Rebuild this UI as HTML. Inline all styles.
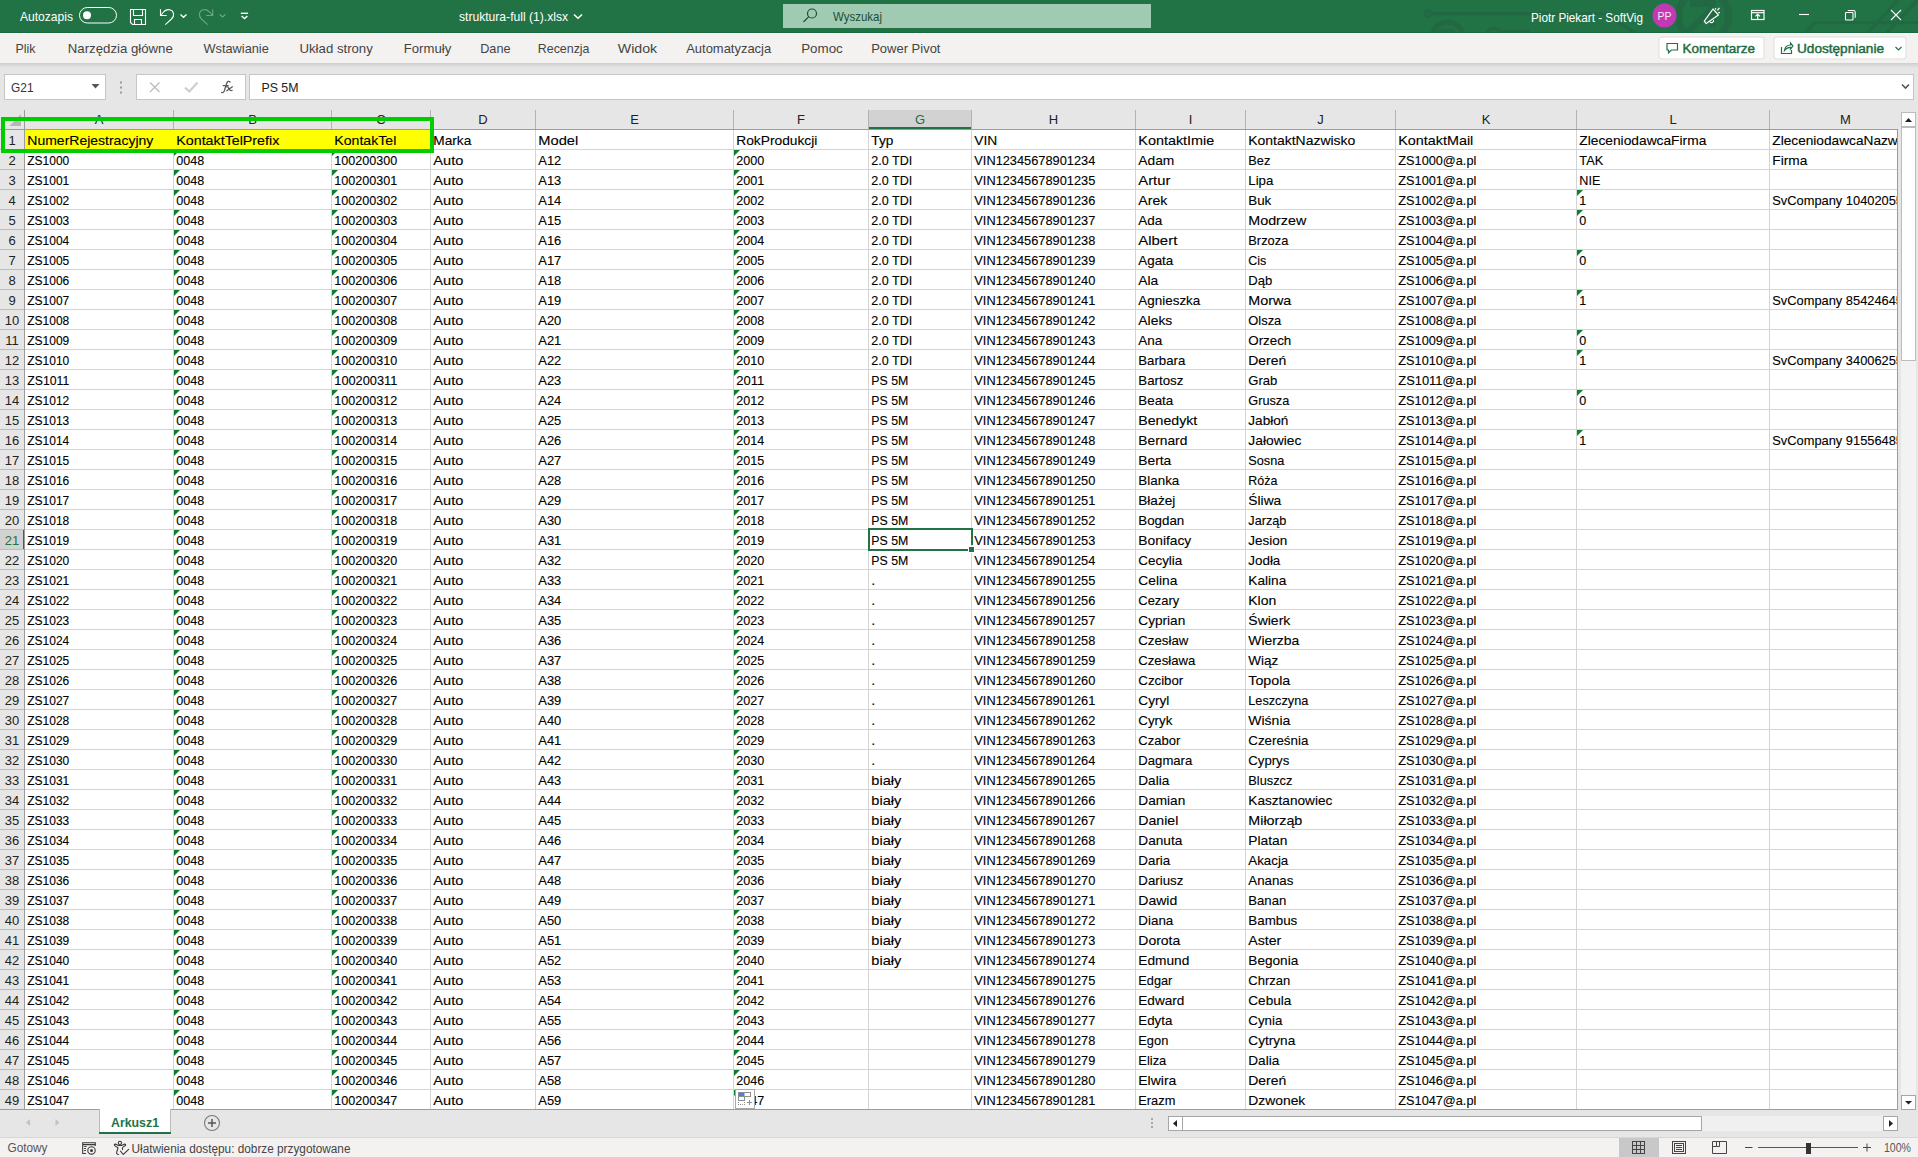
<!DOCTYPE html><html><head><meta charset="utf-8"><style>html,body{margin:0;padding:0;width:1918px;height:1157px;overflow:hidden;background:#e6e6e6;font-family:"Liberation Sans",sans-serif}</style></head><body><svg width="1918" height="1157" viewBox="0 0 1918 1157" font-family="Liberation Sans, sans-serif" style="position:absolute;left:0;top:0">
<defs><clipPath id="gridclip"><rect x="25" y="130" width="1872" height="979"/></clipPath><linearGradient id="shad" x1="0" y1="0" x2="0" y2="1"><stop offset="0" stop-color="#cfcecd"/><stop offset="1" stop-color="#e6e6e6"/></linearGradient></defs>
<rect x="0" y="0" width="1918" height="1157" fill="#e6e6e6"/>
<rect x="0" y="0" width="1918" height="33" fill="#217346"/>
<rect x="0" y="32" width="1918" height="1" fill="#166a3b"/>
<svg x="0" y="0" width="1918" height="32" overflow="hidden"><g fill="none" stroke="#226843" stroke-width="3.4"><path d="M1431.5 13.6 H1605 L1646 40"/><circle cx="1428.4" cy="13.4" r="3.1" stroke-width="3.2"/><circle cx="1447.5" cy="37.7" r="15.5" stroke-width="5"/><circle cx="1494" cy="36" r="7.5" stroke-width="3.4"/><path d="M1500 31.8 H1530"/><circle cx="1703.6" cy="16" r="25" stroke-width="7"/><path d="M1800 38 L1815 22.6 H1918"/><path d="M1864 37 L1900 -2"/><path d="M1883 37 L1920 -3"/></g><path d="M1690 0 H1716 V27 H1710 V7 H1690 Z M1686 29 L1712 5 L1716 9 L1691 33 Z" fill="#226843"/><rect x="1438.4" y="29.4" width="16.6" height="4" fill="#226843"/></svg>
<rect x="0" y="33" width="1918" height="30" fill="#f3f2f1"/>
<rect x="0" y="33" width="1918" height="1" fill="#fcfbfb"/>
<rect x="0" y="63" width="1918" height="5" fill="url(#shad)"/>
<text x="20" y="21" font-size="13" fill="#fff" font-weight="normal" text-anchor="start" textLength="53.00" lengthAdjust="spacingAndGlyphs">Autozapis</text>
<rect x="79.5" y="7.5" width="37" height="15.5" rx="7.75" fill="none" stroke="#fff" stroke-width="1"/>
<circle cx="87" cy="15.3" r="4" fill="#fff"/>
<g fill="none" stroke="#fff" stroke-width="1.1"><path d="M130.5 9.5 H145.5 V24.5 H132.5 L130.5 22.5 Z"/><path d="M133.5 9.5 V15.5 H142.5 V9.5"/><path d="M134.5 24.5 V19.5 H141.5 V24.5"/></g>
<g fill="none" stroke="#fff" stroke-width="1.1"><path d="M160.5 9.3 V15.5 H166.7"/><path d="M161 15 L164 11.5 C167 8.5 172.5 9 173.5 13.5 C174 16 173 17.5 171.5 19 L165.3 24.6"/><path d="M180.5 14.5 L183.5 17.2 L186.5 14.5" stroke-width="1.4"/></g>
<g fill="none" stroke="#fff" stroke-opacity="0.35" stroke-width="1.1"><path d="M212.7 9.3 V15.5 H206.1"/><path d="M212.2 15 L209 11.5 C206 8.5 200.5 9 199.5 13.5 C199 16 200 17.5 201.5 19 L207.6 24.6"/><path d="M219.8 14.5 L222.6 17 L225.4 14.5" stroke-width="1.2"/></g>
<g fill="none" stroke="#fff" stroke-width="1.4"><path d="M240.8 13.3 H248.1"/><path d="M241.6 16 L244.5 18.6 L247.4 16"/></g>
<text x="459" y="21" font-size="13" fill="#fff" font-weight="normal" text-anchor="start" textLength="109.00" lengthAdjust="spacingAndGlyphs">struktura-full (1).xlsx</text>
<path d="M574 14.5 L578 18.3 L582 14.5" fill="none" stroke="#fff" stroke-width="1.5"/>
<rect x="783" y="4" width="368" height="24" fill="#a0cbb2"/>
<g fill="none" stroke="#1b4f33" stroke-width="1.2"><circle cx="812" cy="13.5" r="4.5"/><path d="M808.8 16.7 L803.5 22"/></g>
<text x="833" y="20.5" font-size="13" fill="#1b4f33" font-weight="normal" text-anchor="start" textLength="49.00" lengthAdjust="spacingAndGlyphs">Wyszukaj</text>
<text x="1531" y="21.5" font-size="13" fill="#fff" font-weight="normal" text-anchor="start" textLength="112.00" lengthAdjust="spacingAndGlyphs">Piotr Piekart - SoftVig</text>
<circle cx="1664.5" cy="15.5" r="12" fill="#c239b3"/>
<text x="1664.5" y="20" font-size="11" fill="#fbe9f8" font-weight="normal" text-anchor="middle" textLength="14.00" lengthAdjust="spacingAndGlyphs">PP</text>
<g fill="none" stroke="#fff" stroke-width="1.2" stroke-linejoin="round"><path d="M1713 9 L1718.4 14.9 L1706.2 23.6 L1704.3 21.2 Z"/><path d="M1709.8 21.5 A2 2 0 0 0 1713.5 20"/><path d="M1715.4 8 L1715.8 9.5 M1717.3 10.3 L1719.5 7.8 M1718.3 12.6 L1720 12.6"/></g>
<g fill="none" stroke="#fff" stroke-width="1.2"><rect x="1751.5" y="10.5" width="12.5" height="9"/><path d="M1751.5 12.7 H1764"/><path d="M1757.7 19.5 V14.3 M1755.4 16.4 L1757.7 14 L1760 16.4"/></g>
<g fill="none" stroke="#fff" stroke-width="1.1"><path d="M1799 14.5 H1809"/><rect x="1845.5" y="12.5" width="7.5" height="7.5" rx="0.8"/><path d="M1847.8 10.5 H1853.5 Q1855.2 10.5 1855.2 12.2 V17.8"/><path d="M1891 10 L1901 20 M1901 10 L1891 20"/></g>
<text x="15.5" y="53" font-size="13" fill="#444" font-weight="normal" text-anchor="start" textLength="20.00" lengthAdjust="spacingAndGlyphs">Plik</text>
<text x="67.8" y="53" font-size="13" fill="#444" font-weight="normal" text-anchor="start" textLength="105.00" lengthAdjust="spacingAndGlyphs">Narzędzia główne</text>
<text x="203.5" y="53" font-size="13" fill="#444" font-weight="normal" text-anchor="start" textLength="65.30" lengthAdjust="spacingAndGlyphs">Wstawianie</text>
<text x="299.5" y="53" font-size="13" fill="#444" font-weight="normal" text-anchor="start" textLength="73.30" lengthAdjust="spacingAndGlyphs">Układ strony</text>
<text x="403.8" y="53" font-size="13" fill="#444" font-weight="normal" text-anchor="start" textLength="47.40" lengthAdjust="spacingAndGlyphs">Formuły</text>
<text x="480.2" y="53" font-size="13" fill="#444" font-weight="normal" text-anchor="start" textLength="30.30" lengthAdjust="spacingAndGlyphs">Dane</text>
<text x="537.8" y="53" font-size="13" fill="#444" font-weight="normal" text-anchor="start" textLength="51.70" lengthAdjust="spacingAndGlyphs">Recenzja</text>
<text x="617.8" y="53" font-size="13" fill="#444" font-weight="normal" text-anchor="start" textLength="39.40" lengthAdjust="spacingAndGlyphs">Widok</text>
<text x="686.2" y="53" font-size="13" fill="#444" font-weight="normal" text-anchor="start" textLength="85.00" lengthAdjust="spacingAndGlyphs">Automatyzacja</text>
<text x="801.2" y="53" font-size="13" fill="#444" font-weight="normal" text-anchor="start" textLength="41.60" lengthAdjust="spacingAndGlyphs">Pomoc</text>
<text x="871.2" y="53" font-size="13" fill="#444" font-weight="normal" text-anchor="start" textLength="69.30" lengthAdjust="spacingAndGlyphs">Power Pivot</text>
<rect x="1659" y="37" width="105" height="22" rx="3" fill="#fff" stroke="#e1dfdd"/>
<g fill="none" stroke="#217346" stroke-width="1.2"><path d="M1667 43.5 H1677.5 V50 H1671.5 L1668.5 52.8 V50 H1667 Z"/></g>
<text x="1682.5" y="53" font-size="13" fill="#1e6b41" font-weight="normal" text-anchor="start" textLength="72.50" lengthAdjust="spacingAndGlyphs" stroke="#1e6b41" stroke-width="0.45">Komentarze</text>
<rect x="1774" y="37" width="132" height="22" rx="3" fill="#fff" stroke="#e1dfdd"/>
<g fill="none" stroke="#217346" stroke-width="1.2"><path d="M1781.5 47 V53.5 H1791.5 V50"/><path d="M1784.5 50.5 C1785 46.5 1787.5 45 1790.5 45 V43 L1793 46 L1790.5 49 V47.3 C1788 47.3 1786 48.5 1784.5 50.5 Z"/></g>
<text x="1797" y="53" font-size="13" fill="#1e6b41" font-weight="normal" text-anchor="start" textLength="87.00" lengthAdjust="spacingAndGlyphs" stroke="#1e6b41" stroke-width="0.45">Udostępnianie</text>
<path d="M1895.5 47 L1898.5 50 L1901.5 47" fill="none" stroke="#217346" stroke-width="1.2"/>
<rect x="4.5" y="74.5" width="101" height="25" fill="#fff" stroke="#c6c6c6"/>
<text x="11" y="91.5" font-size="13" fill="#333" font-weight="normal" text-anchor="start" textLength="22.50" lengthAdjust="spacingAndGlyphs">G21</text>
<path d="M91.5 84 H99.5 L95.5 88.5 Z" fill="#555"/>
<rect x="120" y="81.5" width="2" height="2" fill="#9a9a9a"/>
<rect x="120" y="86.5" width="2" height="2" fill="#9a9a9a"/>
<rect x="120" y="91.5" width="2" height="2" fill="#9a9a9a"/>
<rect x="136.5" y="74.5" width="109" height="25" fill="#fff" stroke="#c6c6c6"/>
<g fill="none" stroke="#bdbdbd" stroke-width="1.3"><path d="M150 82.5 L159.5 92 M159.5 82.5 L150 92"/></g>
<path d="M185 87.5 L189.3 91.5 L197.5 82.5" fill="none" stroke="#cdcdcd" stroke-width="2.1"/>
<g fill="none" stroke="#5a5a5a" stroke-width="1.25" stroke-linecap="round"><path d="M230 82 C229 80.8 227.3 81.3 226.8 83 L224.2 91.2 C223.8 92.6 222.6 93 221.5 92.3"/><path d="M223.2 85.6 H228.2"/><path d="M226.6 86.8 C228 86.4 228.6 87.5 229.4 89.3 C229.9 90.6 231 90.9 232.2 90.3 M232.4 86.8 L226.8 90.8"/></g>
<rect x="249.5" y="74.5" width="1664" height="25" fill="#fff" stroke="#c6c6c6"/>
<text x="261.5" y="91.5" font-size="13" fill="#222" font-weight="normal" text-anchor="start" textLength="37.00" lengthAdjust="spacingAndGlyphs">PS 5M</text>
<path d="M1902 84.5 L1905.5 88 L1909 84.5" fill="none" stroke="#555" stroke-width="1.6"/>
<rect x="0" y="110" width="1918" height="20" fill="#e6e6e6"/>
<rect x="0" y="130" width="25" height="980" fill="#e6e6e6"/>
<rect x="25" y="130" width="1872" height="979" fill="#fff"/>
<rect x="25" y="130" width="406" height="20" fill="#ffff00"/>
<rect x="869" y="110" width="103" height="19" fill="#d2d2d2"/>
<rect x="869" y="127" width="102" height="2" fill="#217346"/>
<rect x="0" y="529" width="23" height="21" fill="#d2d2d2"/>
<rect x="23" y="529" width="2" height="21" fill="#217346"/>
<rect x="173" y="130" width="1" height="979" fill="#d4d4d4"/>
<rect x="331" y="130" width="1" height="979" fill="#d4d4d4"/>
<rect x="430" y="130" width="1" height="979" fill="#d4d4d4"/>
<rect x="535" y="130" width="1" height="979" fill="#d4d4d4"/>
<rect x="733" y="130" width="1" height="979" fill="#d4d4d4"/>
<rect x="868" y="130" width="1" height="979" fill="#d4d4d4"/>
<rect x="971" y="130" width="1" height="979" fill="#d4d4d4"/>
<rect x="1135" y="130" width="1" height="979" fill="#d4d4d4"/>
<rect x="1245" y="130" width="1" height="979" fill="#d4d4d4"/>
<rect x="1395" y="130" width="1" height="979" fill="#d4d4d4"/>
<rect x="1576" y="130" width="1" height="979" fill="#d4d4d4"/>
<rect x="1769" y="130" width="1" height="979" fill="#d4d4d4"/>
<rect x="25" y="149" width="1872" height="1" fill="#d4d4d4"/>
<rect x="25" y="169" width="1872" height="1" fill="#d4d4d4"/>
<rect x="25" y="189" width="1872" height="1" fill="#d4d4d4"/>
<rect x="25" y="209" width="1872" height="1" fill="#d4d4d4"/>
<rect x="25" y="229" width="1872" height="1" fill="#d4d4d4"/>
<rect x="25" y="249" width="1872" height="1" fill="#d4d4d4"/>
<rect x="25" y="269" width="1872" height="1" fill="#d4d4d4"/>
<rect x="25" y="289" width="1872" height="1" fill="#d4d4d4"/>
<rect x="25" y="309" width="1872" height="1" fill="#d4d4d4"/>
<rect x="25" y="329" width="1872" height="1" fill="#d4d4d4"/>
<rect x="25" y="349" width="1872" height="1" fill="#d4d4d4"/>
<rect x="25" y="369" width="1872" height="1" fill="#d4d4d4"/>
<rect x="25" y="389" width="1872" height="1" fill="#d4d4d4"/>
<rect x="25" y="409" width="1872" height="1" fill="#d4d4d4"/>
<rect x="25" y="429" width="1872" height="1" fill="#d4d4d4"/>
<rect x="25" y="449" width="1872" height="1" fill="#d4d4d4"/>
<rect x="25" y="469" width="1872" height="1" fill="#d4d4d4"/>
<rect x="25" y="489" width="1872" height="1" fill="#d4d4d4"/>
<rect x="25" y="509" width="1872" height="1" fill="#d4d4d4"/>
<rect x="25" y="529" width="1872" height="1" fill="#d4d4d4"/>
<rect x="25" y="549" width="1872" height="1" fill="#d4d4d4"/>
<rect x="25" y="569" width="1872" height="1" fill="#d4d4d4"/>
<rect x="25" y="589" width="1872" height="1" fill="#d4d4d4"/>
<rect x="25" y="609" width="1872" height="1" fill="#d4d4d4"/>
<rect x="25" y="629" width="1872" height="1" fill="#d4d4d4"/>
<rect x="25" y="649" width="1872" height="1" fill="#d4d4d4"/>
<rect x="25" y="669" width="1872" height="1" fill="#d4d4d4"/>
<rect x="25" y="689" width="1872" height="1" fill="#d4d4d4"/>
<rect x="25" y="709" width="1872" height="1" fill="#d4d4d4"/>
<rect x="25" y="729" width="1872" height="1" fill="#d4d4d4"/>
<rect x="25" y="749" width="1872" height="1" fill="#d4d4d4"/>
<rect x="25" y="769" width="1872" height="1" fill="#d4d4d4"/>
<rect x="25" y="789" width="1872" height="1" fill="#d4d4d4"/>
<rect x="25" y="809" width="1872" height="1" fill="#d4d4d4"/>
<rect x="25" y="829" width="1872" height="1" fill="#d4d4d4"/>
<rect x="25" y="849" width="1872" height="1" fill="#d4d4d4"/>
<rect x="25" y="869" width="1872" height="1" fill="#d4d4d4"/>
<rect x="25" y="889" width="1872" height="1" fill="#d4d4d4"/>
<rect x="25" y="909" width="1872" height="1" fill="#d4d4d4"/>
<rect x="25" y="929" width="1872" height="1" fill="#d4d4d4"/>
<rect x="25" y="949" width="1872" height="1" fill="#d4d4d4"/>
<rect x="25" y="969" width="1872" height="1" fill="#d4d4d4"/>
<rect x="25" y="989" width="1872" height="1" fill="#d4d4d4"/>
<rect x="25" y="1009" width="1872" height="1" fill="#d4d4d4"/>
<rect x="25" y="1029" width="1872" height="1" fill="#d4d4d4"/>
<rect x="25" y="1049" width="1872" height="1" fill="#d4d4d4"/>
<rect x="25" y="1069" width="1872" height="1" fill="#d4d4d4"/>
<rect x="25" y="1089" width="1872" height="1" fill="#d4d4d4"/>
<rect x="25" y="1109" width="1872" height="1" fill="#d4d4d4"/>
<rect x="25" y="130" width="406" height="19" fill="#ffff00"/>
<rect x="173" y="110" width="1" height="19" fill="#b3b3b3"/>
<rect x="331" y="110" width="1" height="19" fill="#b3b3b3"/>
<rect x="430" y="110" width="1" height="19" fill="#b3b3b3"/>
<rect x="535" y="110" width="1" height="19" fill="#b3b3b3"/>
<rect x="733" y="110" width="1" height="19" fill="#b3b3b3"/>
<rect x="868" y="110" width="1" height="19" fill="#b3b3b3"/>
<rect x="971" y="110" width="1" height="19" fill="#b3b3b3"/>
<rect x="1135" y="110" width="1" height="19" fill="#b3b3b3"/>
<rect x="1245" y="110" width="1" height="19" fill="#b3b3b3"/>
<rect x="1395" y="110" width="1" height="19" fill="#b3b3b3"/>
<rect x="1576" y="110" width="1" height="19" fill="#b3b3b3"/>
<rect x="1769" y="110" width="1" height="19" fill="#b3b3b3"/>
<rect x="0" y="129" width="1897" height="1" fill="#9c9c9c"/>
<rect x="24" y="110" width="1" height="999" fill="#9c9c9c"/>
<rect x="0" y="149" width="24" height="1" fill="#bcbcbc"/>
<rect x="0" y="169" width="24" height="1" fill="#bcbcbc"/>
<rect x="0" y="189" width="24" height="1" fill="#bcbcbc"/>
<rect x="0" y="209" width="24" height="1" fill="#bcbcbc"/>
<rect x="0" y="229" width="24" height="1" fill="#bcbcbc"/>
<rect x="0" y="249" width="24" height="1" fill="#bcbcbc"/>
<rect x="0" y="269" width="24" height="1" fill="#bcbcbc"/>
<rect x="0" y="289" width="24" height="1" fill="#bcbcbc"/>
<rect x="0" y="309" width="24" height="1" fill="#bcbcbc"/>
<rect x="0" y="329" width="24" height="1" fill="#bcbcbc"/>
<rect x="0" y="349" width="24" height="1" fill="#bcbcbc"/>
<rect x="0" y="369" width="24" height="1" fill="#bcbcbc"/>
<rect x="0" y="389" width="24" height="1" fill="#bcbcbc"/>
<rect x="0" y="409" width="24" height="1" fill="#bcbcbc"/>
<rect x="0" y="429" width="24" height="1" fill="#bcbcbc"/>
<rect x="0" y="449" width="24" height="1" fill="#bcbcbc"/>
<rect x="0" y="469" width="24" height="1" fill="#bcbcbc"/>
<rect x="0" y="489" width="24" height="1" fill="#bcbcbc"/>
<rect x="0" y="509" width="24" height="1" fill="#bcbcbc"/>
<rect x="0" y="529" width="24" height="1" fill="#bcbcbc"/>
<rect x="0" y="549" width="24" height="1" fill="#bcbcbc"/>
<rect x="0" y="569" width="24" height="1" fill="#bcbcbc"/>
<rect x="0" y="589" width="24" height="1" fill="#bcbcbc"/>
<rect x="0" y="609" width="24" height="1" fill="#bcbcbc"/>
<rect x="0" y="629" width="24" height="1" fill="#bcbcbc"/>
<rect x="0" y="649" width="24" height="1" fill="#bcbcbc"/>
<rect x="0" y="669" width="24" height="1" fill="#bcbcbc"/>
<rect x="0" y="689" width="24" height="1" fill="#bcbcbc"/>
<rect x="0" y="709" width="24" height="1" fill="#bcbcbc"/>
<rect x="0" y="729" width="24" height="1" fill="#bcbcbc"/>
<rect x="0" y="749" width="24" height="1" fill="#bcbcbc"/>
<rect x="0" y="769" width="24" height="1" fill="#bcbcbc"/>
<rect x="0" y="789" width="24" height="1" fill="#bcbcbc"/>
<rect x="0" y="809" width="24" height="1" fill="#bcbcbc"/>
<rect x="0" y="829" width="24" height="1" fill="#bcbcbc"/>
<rect x="0" y="849" width="24" height="1" fill="#bcbcbc"/>
<rect x="0" y="869" width="24" height="1" fill="#bcbcbc"/>
<rect x="0" y="889" width="24" height="1" fill="#bcbcbc"/>
<rect x="0" y="909" width="24" height="1" fill="#bcbcbc"/>
<rect x="0" y="929" width="24" height="1" fill="#bcbcbc"/>
<rect x="0" y="949" width="24" height="1" fill="#bcbcbc"/>
<rect x="0" y="969" width="24" height="1" fill="#bcbcbc"/>
<rect x="0" y="989" width="24" height="1" fill="#bcbcbc"/>
<rect x="0" y="1009" width="24" height="1" fill="#bcbcbc"/>
<rect x="0" y="1029" width="24" height="1" fill="#bcbcbc"/>
<rect x="0" y="1049" width="24" height="1" fill="#bcbcbc"/>
<rect x="0" y="1069" width="24" height="1" fill="#bcbcbc"/>
<rect x="0" y="1089" width="24" height="1" fill="#bcbcbc"/>
<rect x="0" y="1109" width="24" height="1" fill="#bcbcbc"/>
<path d="M9.5 126 L21 126 L21 114 Z" fill="#b6b6b6"/>
<text x="99.0" y="124" font-size="13" fill="#222" font-weight="normal" text-anchor="middle">A</text>
<text x="252.5" y="124" font-size="13" fill="#222" font-weight="normal" text-anchor="middle">B</text>
<text x="381.0" y="124" font-size="13" fill="#222" font-weight="normal" text-anchor="middle">C</text>
<text x="483.0" y="124" font-size="13" fill="#222" font-weight="normal" text-anchor="middle">D</text>
<text x="634.5" y="124" font-size="13" fill="#222" font-weight="normal" text-anchor="middle">E</text>
<text x="801.0" y="124" font-size="13" fill="#222" font-weight="normal" text-anchor="middle">F</text>
<text x="920.0" y="124" font-size="13" fill="#217346" font-weight="normal" text-anchor="middle">G</text>
<text x="1053.5" y="124" font-size="13" fill="#222" font-weight="normal" text-anchor="middle">H</text>
<text x="1190.5" y="124" font-size="13" fill="#222" font-weight="normal" text-anchor="middle">I</text>
<text x="1320.5" y="124" font-size="13" fill="#222" font-weight="normal" text-anchor="middle">J</text>
<text x="1486.0" y="124" font-size="13" fill="#222" font-weight="normal" text-anchor="middle">K</text>
<text x="1673.0" y="124" font-size="13" fill="#222" font-weight="normal" text-anchor="middle">L</text>
<text x="1845.5" y="124" font-size="13" fill="#222" font-weight="normal" text-anchor="middle">M</text>
<text x="12" y="145" font-size="13" fill="#222" font-weight="normal" text-anchor="middle">1</text>
<text x="12" y="165" font-size="13" fill="#222" font-weight="normal" text-anchor="middle">2</text>
<text x="12" y="185" font-size="13" fill="#222" font-weight="normal" text-anchor="middle">3</text>
<text x="12" y="205" font-size="13" fill="#222" font-weight="normal" text-anchor="middle">4</text>
<text x="12" y="225" font-size="13" fill="#222" font-weight="normal" text-anchor="middle">5</text>
<text x="12" y="245" font-size="13" fill="#222" font-weight="normal" text-anchor="middle">6</text>
<text x="12" y="265" font-size="13" fill="#222" font-weight="normal" text-anchor="middle">7</text>
<text x="12" y="285" font-size="13" fill="#222" font-weight="normal" text-anchor="middle">8</text>
<text x="12" y="305" font-size="13" fill="#222" font-weight="normal" text-anchor="middle">9</text>
<text x="12" y="325" font-size="13" fill="#222" font-weight="normal" text-anchor="middle">10</text>
<text x="12" y="345" font-size="13" fill="#222" font-weight="normal" text-anchor="middle">11</text>
<text x="12" y="365" font-size="13" fill="#222" font-weight="normal" text-anchor="middle">12</text>
<text x="12" y="385" font-size="13" fill="#222" font-weight="normal" text-anchor="middle">13</text>
<text x="12" y="405" font-size="13" fill="#222" font-weight="normal" text-anchor="middle">14</text>
<text x="12" y="425" font-size="13" fill="#222" font-weight="normal" text-anchor="middle">15</text>
<text x="12" y="445" font-size="13" fill="#222" font-weight="normal" text-anchor="middle">16</text>
<text x="12" y="465" font-size="13" fill="#222" font-weight="normal" text-anchor="middle">17</text>
<text x="12" y="485" font-size="13" fill="#222" font-weight="normal" text-anchor="middle">18</text>
<text x="12" y="505" font-size="13" fill="#222" font-weight="normal" text-anchor="middle">19</text>
<text x="12" y="525" font-size="13" fill="#222" font-weight="normal" text-anchor="middle">20</text>
<text x="12" y="545" font-size="13" fill="#217346" font-weight="normal" text-anchor="middle">21</text>
<text x="12" y="565" font-size="13" fill="#222" font-weight="normal" text-anchor="middle">22</text>
<text x="12" y="585" font-size="13" fill="#222" font-weight="normal" text-anchor="middle">23</text>
<text x="12" y="605" font-size="13" fill="#222" font-weight="normal" text-anchor="middle">24</text>
<text x="12" y="625" font-size="13" fill="#222" font-weight="normal" text-anchor="middle">25</text>
<text x="12" y="645" font-size="13" fill="#222" font-weight="normal" text-anchor="middle">26</text>
<text x="12" y="665" font-size="13" fill="#222" font-weight="normal" text-anchor="middle">27</text>
<text x="12" y="685" font-size="13" fill="#222" font-weight="normal" text-anchor="middle">28</text>
<text x="12" y="705" font-size="13" fill="#222" font-weight="normal" text-anchor="middle">29</text>
<text x="12" y="725" font-size="13" fill="#222" font-weight="normal" text-anchor="middle">30</text>
<text x="12" y="745" font-size="13" fill="#222" font-weight="normal" text-anchor="middle">31</text>
<text x="12" y="765" font-size="13" fill="#222" font-weight="normal" text-anchor="middle">32</text>
<text x="12" y="785" font-size="13" fill="#222" font-weight="normal" text-anchor="middle">33</text>
<text x="12" y="805" font-size="13" fill="#222" font-weight="normal" text-anchor="middle">34</text>
<text x="12" y="825" font-size="13" fill="#222" font-weight="normal" text-anchor="middle">35</text>
<text x="12" y="845" font-size="13" fill="#222" font-weight="normal" text-anchor="middle">36</text>
<text x="12" y="865" font-size="13" fill="#222" font-weight="normal" text-anchor="middle">37</text>
<text x="12" y="885" font-size="13" fill="#222" font-weight="normal" text-anchor="middle">38</text>
<text x="12" y="905" font-size="13" fill="#222" font-weight="normal" text-anchor="middle">39</text>
<text x="12" y="925" font-size="13" fill="#222" font-weight="normal" text-anchor="middle">40</text>
<text x="12" y="945" font-size="13" fill="#222" font-weight="normal" text-anchor="middle">41</text>
<text x="12" y="965" font-size="13" fill="#222" font-weight="normal" text-anchor="middle">42</text>
<text x="12" y="985" font-size="13" fill="#222" font-weight="normal" text-anchor="middle">43</text>
<text x="12" y="1005" font-size="13" fill="#222" font-weight="normal" text-anchor="middle">44</text>
<text x="12" y="1025" font-size="13" fill="#222" font-weight="normal" text-anchor="middle">45</text>
<text x="12" y="1045" font-size="13" fill="#222" font-weight="normal" text-anchor="middle">46</text>
<text x="12" y="1065" font-size="13" fill="#222" font-weight="normal" text-anchor="middle">47</text>
<text x="12" y="1085" font-size="13" fill="#222" font-weight="normal" text-anchor="middle">48</text>
<text x="12" y="1105" font-size="13" fill="#222" font-weight="normal" text-anchor="middle">49</text>
<g clip-path="url(#gridclip)" stroke="#000" stroke-width="0.12">
<text x="27.3" y="145" font-size="13" fill="#000" font-weight="normal" text-anchor="start" textLength="126.00" lengthAdjust="spacingAndGlyphs">NumerRejestracyjny</text>
<text x="176.3" y="145" font-size="13" fill="#000" font-weight="normal" text-anchor="start" textLength="103.00" lengthAdjust="spacingAndGlyphs">KontaktTelPrefix</text>
<text x="334.3" y="145" font-size="13" fill="#000" font-weight="normal" text-anchor="start" textLength="62.00" lengthAdjust="spacingAndGlyphs">KontakTel</text>
<text x="433.3" y="145" font-size="13" fill="#000" font-weight="normal" text-anchor="start" textLength="38.00" lengthAdjust="spacingAndGlyphs">Marka</text>
<text x="538.3" y="145" font-size="13" fill="#000" font-weight="normal" text-anchor="start" textLength="40.00" lengthAdjust="spacingAndGlyphs">Model</text>
<text x="736.3" y="145" font-size="13" fill="#000" font-weight="normal" text-anchor="start" textLength="81.00" lengthAdjust="spacingAndGlyphs">RokProdukcji</text>
<text x="871.3" y="145" font-size="13" fill="#000" font-weight="normal" text-anchor="start" textLength="22.00" lengthAdjust="spacingAndGlyphs">Typ</text>
<text x="974.3" y="145" font-size="13" fill="#000" font-weight="normal" text-anchor="start" textLength="23.00" lengthAdjust="spacingAndGlyphs">VIN</text>
<text x="1138.3" y="145" font-size="13" fill="#000" font-weight="normal" text-anchor="start" textLength="76.00" lengthAdjust="spacingAndGlyphs">KontaktImie</text>
<text x="1248.3" y="145" font-size="13" fill="#000" font-weight="normal" text-anchor="start" textLength="107.00" lengthAdjust="spacingAndGlyphs">KontaktNazwisko</text>
<text x="1398.3" y="145" font-size="13" fill="#000" font-weight="normal" text-anchor="start" textLength="75.00" lengthAdjust="spacingAndGlyphs">KontaktMail</text>
<text x="1579.3" y="145" font-size="13" fill="#000" font-weight="normal" text-anchor="start" textLength="127.00" lengthAdjust="spacingAndGlyphs">ZleceniodawcaFirma</text>
<text x="1772.3" y="145" font-size="13" fill="#000" font-weight="normal" text-anchor="start" textLength="133.00" lengthAdjust="spacingAndGlyphs">ZleceniodawcaNazwa</text>
<text x="27.3" y="165" font-size="13" fill="#000" font-weight="normal" text-anchor="start" textLength="42.00" lengthAdjust="spacingAndGlyphs">ZS1000</text>
<path d="M174 150 H180 L174 156 Z" fill="#0e7f2f" stroke="none"/>
<text x="176.3" y="165" font-size="13" fill="#000" font-weight="normal" text-anchor="start" textLength="28.00" lengthAdjust="spacingAndGlyphs">0048</text>
<path d="M332 150 H338 L332 156 Z" fill="#0e7f2f" stroke="none"/>
<text x="334.3" y="165" font-size="13" fill="#000" font-weight="normal" text-anchor="start" textLength="63.00" lengthAdjust="spacingAndGlyphs">100200300</text>
<text x="433.3" y="165" font-size="13" fill="#000" font-weight="normal" text-anchor="start" textLength="30.00" lengthAdjust="spacingAndGlyphs">Auto</text>
<text x="538.3" y="165" font-size="13" fill="#000" font-weight="normal" text-anchor="start" textLength="23.00" lengthAdjust="spacingAndGlyphs">A12</text>
<path d="M734 150 H740 L734 156 Z" fill="#0e7f2f" stroke="none"/>
<text x="736.3" y="165" font-size="13" fill="#000" font-weight="normal" text-anchor="start" textLength="28.00" lengthAdjust="spacingAndGlyphs">2000</text>
<text x="871.3" y="165" font-size="13" fill="#000" font-weight="normal" text-anchor="start" textLength="41.00" lengthAdjust="spacingAndGlyphs">2.0 TDI</text>
<text x="974.3" y="165" font-size="13" fill="#000" font-weight="normal" text-anchor="start" textLength="121.00" lengthAdjust="spacingAndGlyphs">VIN12345678901234</text>
<text x="1138.3" y="165" font-size="13" fill="#000" font-weight="normal" text-anchor="start" textLength="36.00" lengthAdjust="spacingAndGlyphs">Adam</text>
<text x="1248.3" y="165" font-size="13" fill="#000" font-weight="normal" text-anchor="start" textLength="22.00" lengthAdjust="spacingAndGlyphs">Bez</text>
<text x="1398.3" y="165" font-size="13" fill="#000" font-weight="normal" text-anchor="start" textLength="78.00" lengthAdjust="spacingAndGlyphs">ZS1000@a.pl</text>
<text x="1579.3" y="165" font-size="13" fill="#000" font-weight="normal" text-anchor="start" textLength="24.00" lengthAdjust="spacingAndGlyphs">TAK</text>
<text x="1772.3" y="165" font-size="13" fill="#000" font-weight="normal" text-anchor="start" textLength="35.00" lengthAdjust="spacingAndGlyphs">Firma</text>
<text x="27.3" y="185" font-size="13" fill="#000" font-weight="normal" text-anchor="start" textLength="42.00" lengthAdjust="spacingAndGlyphs">ZS1001</text>
<path d="M174 170 H180 L174 176 Z" fill="#0e7f2f" stroke="none"/>
<text x="176.3" y="185" font-size="13" fill="#000" font-weight="normal" text-anchor="start" textLength="28.00" lengthAdjust="spacingAndGlyphs">0048</text>
<path d="M332 170 H338 L332 176 Z" fill="#0e7f2f" stroke="none"/>
<text x="334.3" y="185" font-size="13" fill="#000" font-weight="normal" text-anchor="start" textLength="63.00" lengthAdjust="spacingAndGlyphs">100200301</text>
<text x="433.3" y="185" font-size="13" fill="#000" font-weight="normal" text-anchor="start" textLength="30.00" lengthAdjust="spacingAndGlyphs">Auto</text>
<text x="538.3" y="185" font-size="13" fill="#000" font-weight="normal" text-anchor="start" textLength="23.00" lengthAdjust="spacingAndGlyphs">A13</text>
<path d="M734 170 H740 L734 176 Z" fill="#0e7f2f" stroke="none"/>
<text x="736.3" y="185" font-size="13" fill="#000" font-weight="normal" text-anchor="start" textLength="28.00" lengthAdjust="spacingAndGlyphs">2001</text>
<text x="871.3" y="185" font-size="13" fill="#000" font-weight="normal" text-anchor="start" textLength="41.00" lengthAdjust="spacingAndGlyphs">2.0 TDI</text>
<text x="974.3" y="185" font-size="13" fill="#000" font-weight="normal" text-anchor="start" textLength="121.00" lengthAdjust="spacingAndGlyphs">VIN12345678901235</text>
<text x="1138.3" y="185" font-size="13" fill="#000" font-weight="normal" text-anchor="start" textLength="32.00" lengthAdjust="spacingAndGlyphs">Artur</text>
<text x="1248.3" y="185" font-size="13" fill="#000" font-weight="normal" text-anchor="start" textLength="25.00" lengthAdjust="spacingAndGlyphs">Lipa</text>
<text x="1398.3" y="185" font-size="13" fill="#000" font-weight="normal" text-anchor="start" textLength="78.00" lengthAdjust="spacingAndGlyphs">ZS1001@a.pl</text>
<text x="1579.3" y="185" font-size="13" fill="#000" font-weight="normal" text-anchor="start" textLength="21.00" lengthAdjust="spacingAndGlyphs">NIE</text>
<text x="27.3" y="205" font-size="13" fill="#000" font-weight="normal" text-anchor="start" textLength="42.00" lengthAdjust="spacingAndGlyphs">ZS1002</text>
<path d="M174 190 H180 L174 196 Z" fill="#0e7f2f" stroke="none"/>
<text x="176.3" y="205" font-size="13" fill="#000" font-weight="normal" text-anchor="start" textLength="28.00" lengthAdjust="spacingAndGlyphs">0048</text>
<path d="M332 190 H338 L332 196 Z" fill="#0e7f2f" stroke="none"/>
<text x="334.3" y="205" font-size="13" fill="#000" font-weight="normal" text-anchor="start" textLength="63.00" lengthAdjust="spacingAndGlyphs">100200302</text>
<text x="433.3" y="205" font-size="13" fill="#000" font-weight="normal" text-anchor="start" textLength="30.00" lengthAdjust="spacingAndGlyphs">Auto</text>
<text x="538.3" y="205" font-size="13" fill="#000" font-weight="normal" text-anchor="start" textLength="23.00" lengthAdjust="spacingAndGlyphs">A14</text>
<path d="M734 190 H740 L734 196 Z" fill="#0e7f2f" stroke="none"/>
<text x="736.3" y="205" font-size="13" fill="#000" font-weight="normal" text-anchor="start" textLength="28.00" lengthAdjust="spacingAndGlyphs">2002</text>
<text x="871.3" y="205" font-size="13" fill="#000" font-weight="normal" text-anchor="start" textLength="41.00" lengthAdjust="spacingAndGlyphs">2.0 TDI</text>
<text x="974.3" y="205" font-size="13" fill="#000" font-weight="normal" text-anchor="start" textLength="121.00" lengthAdjust="spacingAndGlyphs">VIN12345678901236</text>
<text x="1138.3" y="205" font-size="13" fill="#000" font-weight="normal" text-anchor="start" textLength="29.00" lengthAdjust="spacingAndGlyphs">Arek</text>
<text x="1248.3" y="205" font-size="13" fill="#000" font-weight="normal" text-anchor="start" textLength="23.00" lengthAdjust="spacingAndGlyphs">Buk</text>
<text x="1398.3" y="205" font-size="13" fill="#000" font-weight="normal" text-anchor="start" textLength="78.00" lengthAdjust="spacingAndGlyphs">ZS1002@a.pl</text>
<path d="M1577 190 H1583 L1577 196 Z" fill="#0e7f2f" stroke="none"/>
<text x="1579.3" y="205" font-size="13" fill="#000" font-weight="normal" text-anchor="start" textLength="7.00" lengthAdjust="spacingAndGlyphs">1</text>
<text x="1772.3" y="205" font-size="13" fill="#000" font-weight="normal" text-anchor="start" textLength="145.00" lengthAdjust="spacingAndGlyphs">SvCompany 1040205512</text>
<text x="27.3" y="225" font-size="13" fill="#000" font-weight="normal" text-anchor="start" textLength="42.00" lengthAdjust="spacingAndGlyphs">ZS1003</text>
<path d="M174 210 H180 L174 216 Z" fill="#0e7f2f" stroke="none"/>
<text x="176.3" y="225" font-size="13" fill="#000" font-weight="normal" text-anchor="start" textLength="28.00" lengthAdjust="spacingAndGlyphs">0048</text>
<path d="M332 210 H338 L332 216 Z" fill="#0e7f2f" stroke="none"/>
<text x="334.3" y="225" font-size="13" fill="#000" font-weight="normal" text-anchor="start" textLength="63.00" lengthAdjust="spacingAndGlyphs">100200303</text>
<text x="433.3" y="225" font-size="13" fill="#000" font-weight="normal" text-anchor="start" textLength="30.00" lengthAdjust="spacingAndGlyphs">Auto</text>
<text x="538.3" y="225" font-size="13" fill="#000" font-weight="normal" text-anchor="start" textLength="23.00" lengthAdjust="spacingAndGlyphs">A15</text>
<path d="M734 210 H740 L734 216 Z" fill="#0e7f2f" stroke="none"/>
<text x="736.3" y="225" font-size="13" fill="#000" font-weight="normal" text-anchor="start" textLength="28.00" lengthAdjust="spacingAndGlyphs">2003</text>
<text x="871.3" y="225" font-size="13" fill="#000" font-weight="normal" text-anchor="start" textLength="41.00" lengthAdjust="spacingAndGlyphs">2.0 TDI</text>
<text x="974.3" y="225" font-size="13" fill="#000" font-weight="normal" text-anchor="start" textLength="121.00" lengthAdjust="spacingAndGlyphs">VIN12345678901237</text>
<text x="1138.3" y="225" font-size="13" fill="#000" font-weight="normal" text-anchor="start" textLength="24.00" lengthAdjust="spacingAndGlyphs">Ada</text>
<text x="1248.3" y="225" font-size="13" fill="#000" font-weight="normal" text-anchor="start" textLength="58.00" lengthAdjust="spacingAndGlyphs">Modrzew</text>
<text x="1398.3" y="225" font-size="13" fill="#000" font-weight="normal" text-anchor="start" textLength="78.00" lengthAdjust="spacingAndGlyphs">ZS1003@a.pl</text>
<path d="M1577 210 H1583 L1577 216 Z" fill="#0e7f2f" stroke="none"/>
<text x="1579.3" y="225" font-size="13" fill="#000" font-weight="normal" text-anchor="start" textLength="7.00" lengthAdjust="spacingAndGlyphs">0</text>
<text x="27.3" y="245" font-size="13" fill="#000" font-weight="normal" text-anchor="start" textLength="42.00" lengthAdjust="spacingAndGlyphs">ZS1004</text>
<path d="M174 230 H180 L174 236 Z" fill="#0e7f2f" stroke="none"/>
<text x="176.3" y="245" font-size="13" fill="#000" font-weight="normal" text-anchor="start" textLength="28.00" lengthAdjust="spacingAndGlyphs">0048</text>
<path d="M332 230 H338 L332 236 Z" fill="#0e7f2f" stroke="none"/>
<text x="334.3" y="245" font-size="13" fill="#000" font-weight="normal" text-anchor="start" textLength="63.00" lengthAdjust="spacingAndGlyphs">100200304</text>
<text x="433.3" y="245" font-size="13" fill="#000" font-weight="normal" text-anchor="start" textLength="30.00" lengthAdjust="spacingAndGlyphs">Auto</text>
<text x="538.3" y="245" font-size="13" fill="#000" font-weight="normal" text-anchor="start" textLength="23.00" lengthAdjust="spacingAndGlyphs">A16</text>
<path d="M734 230 H740 L734 236 Z" fill="#0e7f2f" stroke="none"/>
<text x="736.3" y="245" font-size="13" fill="#000" font-weight="normal" text-anchor="start" textLength="28.00" lengthAdjust="spacingAndGlyphs">2004</text>
<text x="871.3" y="245" font-size="13" fill="#000" font-weight="normal" text-anchor="start" textLength="41.00" lengthAdjust="spacingAndGlyphs">2.0 TDI</text>
<text x="974.3" y="245" font-size="13" fill="#000" font-weight="normal" text-anchor="start" textLength="121.00" lengthAdjust="spacingAndGlyphs">VIN12345678901238</text>
<text x="1138.3" y="245" font-size="13" fill="#000" font-weight="normal" text-anchor="start" textLength="39.00" lengthAdjust="spacingAndGlyphs">Albert</text>
<text x="1248.3" y="245" font-size="13" fill="#000" font-weight="normal" text-anchor="start" textLength="40.00" lengthAdjust="spacingAndGlyphs">Brzoza</text>
<text x="1398.3" y="245" font-size="13" fill="#000" font-weight="normal" text-anchor="start" textLength="78.00" lengthAdjust="spacingAndGlyphs">ZS1004@a.pl</text>
<text x="27.3" y="265" font-size="13" fill="#000" font-weight="normal" text-anchor="start" textLength="42.00" lengthAdjust="spacingAndGlyphs">ZS1005</text>
<path d="M174 250 H180 L174 256 Z" fill="#0e7f2f" stroke="none"/>
<text x="176.3" y="265" font-size="13" fill="#000" font-weight="normal" text-anchor="start" textLength="28.00" lengthAdjust="spacingAndGlyphs">0048</text>
<path d="M332 250 H338 L332 256 Z" fill="#0e7f2f" stroke="none"/>
<text x="334.3" y="265" font-size="13" fill="#000" font-weight="normal" text-anchor="start" textLength="63.00" lengthAdjust="spacingAndGlyphs">100200305</text>
<text x="433.3" y="265" font-size="13" fill="#000" font-weight="normal" text-anchor="start" textLength="30.00" lengthAdjust="spacingAndGlyphs">Auto</text>
<text x="538.3" y="265" font-size="13" fill="#000" font-weight="normal" text-anchor="start" textLength="23.00" lengthAdjust="spacingAndGlyphs">A17</text>
<path d="M734 250 H740 L734 256 Z" fill="#0e7f2f" stroke="none"/>
<text x="736.3" y="265" font-size="13" fill="#000" font-weight="normal" text-anchor="start" textLength="28.00" lengthAdjust="spacingAndGlyphs">2005</text>
<text x="871.3" y="265" font-size="13" fill="#000" font-weight="normal" text-anchor="start" textLength="41.00" lengthAdjust="spacingAndGlyphs">2.0 TDI</text>
<text x="974.3" y="265" font-size="13" fill="#000" font-weight="normal" text-anchor="start" textLength="121.00" lengthAdjust="spacingAndGlyphs">VIN12345678901239</text>
<text x="1138.3" y="265" font-size="13" fill="#000" font-weight="normal" text-anchor="start" textLength="35.00" lengthAdjust="spacingAndGlyphs">Agata</text>
<text x="1248.3" y="265" font-size="13" fill="#000" font-weight="normal" text-anchor="start" textLength="18.00" lengthAdjust="spacingAndGlyphs">Cis</text>
<text x="1398.3" y="265" font-size="13" fill="#000" font-weight="normal" text-anchor="start" textLength="78.00" lengthAdjust="spacingAndGlyphs">ZS1005@a.pl</text>
<path d="M1577 250 H1583 L1577 256 Z" fill="#0e7f2f" stroke="none"/>
<text x="1579.3" y="265" font-size="13" fill="#000" font-weight="normal" text-anchor="start" textLength="7.00" lengthAdjust="spacingAndGlyphs">0</text>
<text x="27.3" y="285" font-size="13" fill="#000" font-weight="normal" text-anchor="start" textLength="42.00" lengthAdjust="spacingAndGlyphs">ZS1006</text>
<path d="M174 270 H180 L174 276 Z" fill="#0e7f2f" stroke="none"/>
<text x="176.3" y="285" font-size="13" fill="#000" font-weight="normal" text-anchor="start" textLength="28.00" lengthAdjust="spacingAndGlyphs">0048</text>
<path d="M332 270 H338 L332 276 Z" fill="#0e7f2f" stroke="none"/>
<text x="334.3" y="285" font-size="13" fill="#000" font-weight="normal" text-anchor="start" textLength="63.00" lengthAdjust="spacingAndGlyphs">100200306</text>
<text x="433.3" y="285" font-size="13" fill="#000" font-weight="normal" text-anchor="start" textLength="30.00" lengthAdjust="spacingAndGlyphs">Auto</text>
<text x="538.3" y="285" font-size="13" fill="#000" font-weight="normal" text-anchor="start" textLength="23.00" lengthAdjust="spacingAndGlyphs">A18</text>
<path d="M734 270 H740 L734 276 Z" fill="#0e7f2f" stroke="none"/>
<text x="736.3" y="285" font-size="13" fill="#000" font-weight="normal" text-anchor="start" textLength="28.00" lengthAdjust="spacingAndGlyphs">2006</text>
<text x="871.3" y="285" font-size="13" fill="#000" font-weight="normal" text-anchor="start" textLength="41.00" lengthAdjust="spacingAndGlyphs">2.0 TDI</text>
<text x="974.3" y="285" font-size="13" fill="#000" font-weight="normal" text-anchor="start" textLength="121.00" lengthAdjust="spacingAndGlyphs">VIN12345678901240</text>
<text x="1138.3" y="285" font-size="13" fill="#000" font-weight="normal" text-anchor="start" textLength="20.00" lengthAdjust="spacingAndGlyphs">Ala</text>
<text x="1248.3" y="285" font-size="13" fill="#000" font-weight="normal" text-anchor="start" textLength="24.00" lengthAdjust="spacingAndGlyphs">Dąb</text>
<text x="1398.3" y="285" font-size="13" fill="#000" font-weight="normal" text-anchor="start" textLength="78.00" lengthAdjust="spacingAndGlyphs">ZS1006@a.pl</text>
<text x="27.3" y="305" font-size="13" fill="#000" font-weight="normal" text-anchor="start" textLength="42.00" lengthAdjust="spacingAndGlyphs">ZS1007</text>
<path d="M174 290 H180 L174 296 Z" fill="#0e7f2f" stroke="none"/>
<text x="176.3" y="305" font-size="13" fill="#000" font-weight="normal" text-anchor="start" textLength="28.00" lengthAdjust="spacingAndGlyphs">0048</text>
<path d="M332 290 H338 L332 296 Z" fill="#0e7f2f" stroke="none"/>
<text x="334.3" y="305" font-size="13" fill="#000" font-weight="normal" text-anchor="start" textLength="63.00" lengthAdjust="spacingAndGlyphs">100200307</text>
<text x="433.3" y="305" font-size="13" fill="#000" font-weight="normal" text-anchor="start" textLength="30.00" lengthAdjust="spacingAndGlyphs">Auto</text>
<text x="538.3" y="305" font-size="13" fill="#000" font-weight="normal" text-anchor="start" textLength="23.00" lengthAdjust="spacingAndGlyphs">A19</text>
<path d="M734 290 H740 L734 296 Z" fill="#0e7f2f" stroke="none"/>
<text x="736.3" y="305" font-size="13" fill="#000" font-weight="normal" text-anchor="start" textLength="28.00" lengthAdjust="spacingAndGlyphs">2007</text>
<text x="871.3" y="305" font-size="13" fill="#000" font-weight="normal" text-anchor="start" textLength="41.00" lengthAdjust="spacingAndGlyphs">2.0 TDI</text>
<text x="974.3" y="305" font-size="13" fill="#000" font-weight="normal" text-anchor="start" textLength="121.00" lengthAdjust="spacingAndGlyphs">VIN12345678901241</text>
<text x="1138.3" y="305" font-size="13" fill="#000" font-weight="normal" text-anchor="start" textLength="62.00" lengthAdjust="spacingAndGlyphs">Agnieszka</text>
<text x="1248.3" y="305" font-size="13" fill="#000" font-weight="normal" text-anchor="start" textLength="43.00" lengthAdjust="spacingAndGlyphs">Morwa</text>
<text x="1398.3" y="305" font-size="13" fill="#000" font-weight="normal" text-anchor="start" textLength="78.00" lengthAdjust="spacingAndGlyphs">ZS1007@a.pl</text>
<path d="M1577 290 H1583 L1577 296 Z" fill="#0e7f2f" stroke="none"/>
<text x="1579.3" y="305" font-size="13" fill="#000" font-weight="normal" text-anchor="start" textLength="7.00" lengthAdjust="spacingAndGlyphs">1</text>
<text x="1772.3" y="305" font-size="13" fill="#000" font-weight="normal" text-anchor="start" textLength="145.00" lengthAdjust="spacingAndGlyphs">SvCompany 8542464512</text>
<text x="27.3" y="325" font-size="13" fill="#000" font-weight="normal" text-anchor="start" textLength="42.00" lengthAdjust="spacingAndGlyphs">ZS1008</text>
<path d="M174 310 H180 L174 316 Z" fill="#0e7f2f" stroke="none"/>
<text x="176.3" y="325" font-size="13" fill="#000" font-weight="normal" text-anchor="start" textLength="28.00" lengthAdjust="spacingAndGlyphs">0048</text>
<path d="M332 310 H338 L332 316 Z" fill="#0e7f2f" stroke="none"/>
<text x="334.3" y="325" font-size="13" fill="#000" font-weight="normal" text-anchor="start" textLength="63.00" lengthAdjust="spacingAndGlyphs">100200308</text>
<text x="433.3" y="325" font-size="13" fill="#000" font-weight="normal" text-anchor="start" textLength="30.00" lengthAdjust="spacingAndGlyphs">Auto</text>
<text x="538.3" y="325" font-size="13" fill="#000" font-weight="normal" text-anchor="start" textLength="23.00" lengthAdjust="spacingAndGlyphs">A20</text>
<path d="M734 310 H740 L734 316 Z" fill="#0e7f2f" stroke="none"/>
<text x="736.3" y="325" font-size="13" fill="#000" font-weight="normal" text-anchor="start" textLength="28.00" lengthAdjust="spacingAndGlyphs">2008</text>
<text x="871.3" y="325" font-size="13" fill="#000" font-weight="normal" text-anchor="start" textLength="41.00" lengthAdjust="spacingAndGlyphs">2.0 TDI</text>
<text x="974.3" y="325" font-size="13" fill="#000" font-weight="normal" text-anchor="start" textLength="121.00" lengthAdjust="spacingAndGlyphs">VIN12345678901242</text>
<text x="1138.3" y="325" font-size="13" fill="#000" font-weight="normal" text-anchor="start" textLength="34.00" lengthAdjust="spacingAndGlyphs">Aleks</text>
<text x="1248.3" y="325" font-size="13" fill="#000" font-weight="normal" text-anchor="start" textLength="33.00" lengthAdjust="spacingAndGlyphs">Olsza</text>
<text x="1398.3" y="325" font-size="13" fill="#000" font-weight="normal" text-anchor="start" textLength="78.00" lengthAdjust="spacingAndGlyphs">ZS1008@a.pl</text>
<text x="27.3" y="345" font-size="13" fill="#000" font-weight="normal" text-anchor="start" textLength="42.00" lengthAdjust="spacingAndGlyphs">ZS1009</text>
<path d="M174 330 H180 L174 336 Z" fill="#0e7f2f" stroke="none"/>
<text x="176.3" y="345" font-size="13" fill="#000" font-weight="normal" text-anchor="start" textLength="28.00" lengthAdjust="spacingAndGlyphs">0048</text>
<path d="M332 330 H338 L332 336 Z" fill="#0e7f2f" stroke="none"/>
<text x="334.3" y="345" font-size="13" fill="#000" font-weight="normal" text-anchor="start" textLength="63.00" lengthAdjust="spacingAndGlyphs">100200309</text>
<text x="433.3" y="345" font-size="13" fill="#000" font-weight="normal" text-anchor="start" textLength="30.00" lengthAdjust="spacingAndGlyphs">Auto</text>
<text x="538.3" y="345" font-size="13" fill="#000" font-weight="normal" text-anchor="start" textLength="23.00" lengthAdjust="spacingAndGlyphs">A21</text>
<path d="M734 330 H740 L734 336 Z" fill="#0e7f2f" stroke="none"/>
<text x="736.3" y="345" font-size="13" fill="#000" font-weight="normal" text-anchor="start" textLength="28.00" lengthAdjust="spacingAndGlyphs">2009</text>
<text x="871.3" y="345" font-size="13" fill="#000" font-weight="normal" text-anchor="start" textLength="41.00" lengthAdjust="spacingAndGlyphs">2.0 TDI</text>
<text x="974.3" y="345" font-size="13" fill="#000" font-weight="normal" text-anchor="start" textLength="121.00" lengthAdjust="spacingAndGlyphs">VIN12345678901243</text>
<text x="1138.3" y="345" font-size="13" fill="#000" font-weight="normal" text-anchor="start" textLength="24.00" lengthAdjust="spacingAndGlyphs">Ana</text>
<text x="1248.3" y="345" font-size="13" fill="#000" font-weight="normal" text-anchor="start" textLength="43.00" lengthAdjust="spacingAndGlyphs">Orzech</text>
<text x="1398.3" y="345" font-size="13" fill="#000" font-weight="normal" text-anchor="start" textLength="78.00" lengthAdjust="spacingAndGlyphs">ZS1009@a.pl</text>
<path d="M1577 330 H1583 L1577 336 Z" fill="#0e7f2f" stroke="none"/>
<text x="1579.3" y="345" font-size="13" fill="#000" font-weight="normal" text-anchor="start" textLength="7.00" lengthAdjust="spacingAndGlyphs">0</text>
<text x="27.3" y="365" font-size="13" fill="#000" font-weight="normal" text-anchor="start" textLength="42.00" lengthAdjust="spacingAndGlyphs">ZS1010</text>
<path d="M174 350 H180 L174 356 Z" fill="#0e7f2f" stroke="none"/>
<text x="176.3" y="365" font-size="13" fill="#000" font-weight="normal" text-anchor="start" textLength="28.00" lengthAdjust="spacingAndGlyphs">0048</text>
<path d="M332 350 H338 L332 356 Z" fill="#0e7f2f" stroke="none"/>
<text x="334.3" y="365" font-size="13" fill="#000" font-weight="normal" text-anchor="start" textLength="63.00" lengthAdjust="spacingAndGlyphs">100200310</text>
<text x="433.3" y="365" font-size="13" fill="#000" font-weight="normal" text-anchor="start" textLength="30.00" lengthAdjust="spacingAndGlyphs">Auto</text>
<text x="538.3" y="365" font-size="13" fill="#000" font-weight="normal" text-anchor="start" textLength="23.00" lengthAdjust="spacingAndGlyphs">A22</text>
<path d="M734 350 H740 L734 356 Z" fill="#0e7f2f" stroke="none"/>
<text x="736.3" y="365" font-size="13" fill="#000" font-weight="normal" text-anchor="start" textLength="28.00" lengthAdjust="spacingAndGlyphs">2010</text>
<text x="871.3" y="365" font-size="13" fill="#000" font-weight="normal" text-anchor="start" textLength="41.00" lengthAdjust="spacingAndGlyphs">2.0 TDI</text>
<text x="974.3" y="365" font-size="13" fill="#000" font-weight="normal" text-anchor="start" textLength="121.00" lengthAdjust="spacingAndGlyphs">VIN12345678901244</text>
<text x="1138.3" y="365" font-size="13" fill="#000" font-weight="normal" text-anchor="start" textLength="47.00" lengthAdjust="spacingAndGlyphs">Barbara</text>
<text x="1248.3" y="365" font-size="13" fill="#000" font-weight="normal" text-anchor="start" textLength="38.00" lengthAdjust="spacingAndGlyphs">Dereń</text>
<text x="1398.3" y="365" font-size="13" fill="#000" font-weight="normal" text-anchor="start" textLength="78.00" lengthAdjust="spacingAndGlyphs">ZS1010@a.pl</text>
<path d="M1577 350 H1583 L1577 356 Z" fill="#0e7f2f" stroke="none"/>
<text x="1579.3" y="365" font-size="13" fill="#000" font-weight="normal" text-anchor="start" textLength="7.00" lengthAdjust="spacingAndGlyphs">1</text>
<text x="1772.3" y="365" font-size="13" fill="#000" font-weight="normal" text-anchor="start" textLength="145.00" lengthAdjust="spacingAndGlyphs">SvCompany 3400625512</text>
<text x="27.3" y="385" font-size="13" fill="#000" font-weight="normal" text-anchor="start" textLength="42.00" lengthAdjust="spacingAndGlyphs">ZS1011</text>
<path d="M174 370 H180 L174 376 Z" fill="#0e7f2f" stroke="none"/>
<text x="176.3" y="385" font-size="13" fill="#000" font-weight="normal" text-anchor="start" textLength="28.00" lengthAdjust="spacingAndGlyphs">0048</text>
<path d="M332 370 H338 L332 376 Z" fill="#0e7f2f" stroke="none"/>
<text x="334.3" y="385" font-size="13" fill="#000" font-weight="normal" text-anchor="start" textLength="63.00" lengthAdjust="spacingAndGlyphs">100200311</text>
<text x="433.3" y="385" font-size="13" fill="#000" font-weight="normal" text-anchor="start" textLength="30.00" lengthAdjust="spacingAndGlyphs">Auto</text>
<text x="538.3" y="385" font-size="13" fill="#000" font-weight="normal" text-anchor="start" textLength="23.00" lengthAdjust="spacingAndGlyphs">A23</text>
<path d="M734 370 H740 L734 376 Z" fill="#0e7f2f" stroke="none"/>
<text x="736.3" y="385" font-size="13" fill="#000" font-weight="normal" text-anchor="start" textLength="28.00" lengthAdjust="spacingAndGlyphs">2011</text>
<text x="871.3" y="385" font-size="13" fill="#000" font-weight="normal" text-anchor="start" textLength="37.00" lengthAdjust="spacingAndGlyphs">PS 5M</text>
<text x="974.3" y="385" font-size="13" fill="#000" font-weight="normal" text-anchor="start" textLength="121.00" lengthAdjust="spacingAndGlyphs">VIN12345678901245</text>
<text x="1138.3" y="385" font-size="13" fill="#000" font-weight="normal" text-anchor="start" textLength="45.00" lengthAdjust="spacingAndGlyphs">Bartosz</text>
<text x="1248.3" y="385" font-size="13" fill="#000" font-weight="normal" text-anchor="start" textLength="29.00" lengthAdjust="spacingAndGlyphs">Grab</text>
<text x="1398.3" y="385" font-size="13" fill="#000" font-weight="normal" text-anchor="start" textLength="78.00" lengthAdjust="spacingAndGlyphs">ZS1011@a.pl</text>
<text x="27.3" y="405" font-size="13" fill="#000" font-weight="normal" text-anchor="start" textLength="42.00" lengthAdjust="spacingAndGlyphs">ZS1012</text>
<path d="M174 390 H180 L174 396 Z" fill="#0e7f2f" stroke="none"/>
<text x="176.3" y="405" font-size="13" fill="#000" font-weight="normal" text-anchor="start" textLength="28.00" lengthAdjust="spacingAndGlyphs">0048</text>
<path d="M332 390 H338 L332 396 Z" fill="#0e7f2f" stroke="none"/>
<text x="334.3" y="405" font-size="13" fill="#000" font-weight="normal" text-anchor="start" textLength="63.00" lengthAdjust="spacingAndGlyphs">100200312</text>
<text x="433.3" y="405" font-size="13" fill="#000" font-weight="normal" text-anchor="start" textLength="30.00" lengthAdjust="spacingAndGlyphs">Auto</text>
<text x="538.3" y="405" font-size="13" fill="#000" font-weight="normal" text-anchor="start" textLength="23.00" lengthAdjust="spacingAndGlyphs">A24</text>
<path d="M734 390 H740 L734 396 Z" fill="#0e7f2f" stroke="none"/>
<text x="736.3" y="405" font-size="13" fill="#000" font-weight="normal" text-anchor="start" textLength="28.00" lengthAdjust="spacingAndGlyphs">2012</text>
<text x="871.3" y="405" font-size="13" fill="#000" font-weight="normal" text-anchor="start" textLength="37.00" lengthAdjust="spacingAndGlyphs">PS 5M</text>
<text x="974.3" y="405" font-size="13" fill="#000" font-weight="normal" text-anchor="start" textLength="121.00" lengthAdjust="spacingAndGlyphs">VIN12345678901246</text>
<text x="1138.3" y="405" font-size="13" fill="#000" font-weight="normal" text-anchor="start" textLength="35.00" lengthAdjust="spacingAndGlyphs">Beata</text>
<text x="1248.3" y="405" font-size="13" fill="#000" font-weight="normal" text-anchor="start" textLength="41.00" lengthAdjust="spacingAndGlyphs">Grusza</text>
<text x="1398.3" y="405" font-size="13" fill="#000" font-weight="normal" text-anchor="start" textLength="78.00" lengthAdjust="spacingAndGlyphs">ZS1012@a.pl</text>
<path d="M1577 390 H1583 L1577 396 Z" fill="#0e7f2f" stroke="none"/>
<text x="1579.3" y="405" font-size="13" fill="#000" font-weight="normal" text-anchor="start" textLength="7.00" lengthAdjust="spacingAndGlyphs">0</text>
<text x="27.3" y="425" font-size="13" fill="#000" font-weight="normal" text-anchor="start" textLength="42.00" lengthAdjust="spacingAndGlyphs">ZS1013</text>
<path d="M174 410 H180 L174 416 Z" fill="#0e7f2f" stroke="none"/>
<text x="176.3" y="425" font-size="13" fill="#000" font-weight="normal" text-anchor="start" textLength="28.00" lengthAdjust="spacingAndGlyphs">0048</text>
<path d="M332 410 H338 L332 416 Z" fill="#0e7f2f" stroke="none"/>
<text x="334.3" y="425" font-size="13" fill="#000" font-weight="normal" text-anchor="start" textLength="63.00" lengthAdjust="spacingAndGlyphs">100200313</text>
<text x="433.3" y="425" font-size="13" fill="#000" font-weight="normal" text-anchor="start" textLength="30.00" lengthAdjust="spacingAndGlyphs">Auto</text>
<text x="538.3" y="425" font-size="13" fill="#000" font-weight="normal" text-anchor="start" textLength="23.00" lengthAdjust="spacingAndGlyphs">A25</text>
<path d="M734 410 H740 L734 416 Z" fill="#0e7f2f" stroke="none"/>
<text x="736.3" y="425" font-size="13" fill="#000" font-weight="normal" text-anchor="start" textLength="28.00" lengthAdjust="spacingAndGlyphs">2013</text>
<text x="871.3" y="425" font-size="13" fill="#000" font-weight="normal" text-anchor="start" textLength="37.00" lengthAdjust="spacingAndGlyphs">PS 5M</text>
<text x="974.3" y="425" font-size="13" fill="#000" font-weight="normal" text-anchor="start" textLength="121.00" lengthAdjust="spacingAndGlyphs">VIN12345678901247</text>
<text x="1138.3" y="425" font-size="13" fill="#000" font-weight="normal" text-anchor="start" textLength="59.00" lengthAdjust="spacingAndGlyphs">Benedykt</text>
<text x="1248.3" y="425" font-size="13" fill="#000" font-weight="normal" text-anchor="start" textLength="40.00" lengthAdjust="spacingAndGlyphs">Jabłoń</text>
<text x="1398.3" y="425" font-size="13" fill="#000" font-weight="normal" text-anchor="start" textLength="78.00" lengthAdjust="spacingAndGlyphs">ZS1013@a.pl</text>
<text x="27.3" y="445" font-size="13" fill="#000" font-weight="normal" text-anchor="start" textLength="42.00" lengthAdjust="spacingAndGlyphs">ZS1014</text>
<path d="M174 430 H180 L174 436 Z" fill="#0e7f2f" stroke="none"/>
<text x="176.3" y="445" font-size="13" fill="#000" font-weight="normal" text-anchor="start" textLength="28.00" lengthAdjust="spacingAndGlyphs">0048</text>
<path d="M332 430 H338 L332 436 Z" fill="#0e7f2f" stroke="none"/>
<text x="334.3" y="445" font-size="13" fill="#000" font-weight="normal" text-anchor="start" textLength="63.00" lengthAdjust="spacingAndGlyphs">100200314</text>
<text x="433.3" y="445" font-size="13" fill="#000" font-weight="normal" text-anchor="start" textLength="30.00" lengthAdjust="spacingAndGlyphs">Auto</text>
<text x="538.3" y="445" font-size="13" fill="#000" font-weight="normal" text-anchor="start" textLength="23.00" lengthAdjust="spacingAndGlyphs">A26</text>
<path d="M734 430 H740 L734 436 Z" fill="#0e7f2f" stroke="none"/>
<text x="736.3" y="445" font-size="13" fill="#000" font-weight="normal" text-anchor="start" textLength="28.00" lengthAdjust="spacingAndGlyphs">2014</text>
<text x="871.3" y="445" font-size="13" fill="#000" font-weight="normal" text-anchor="start" textLength="37.00" lengthAdjust="spacingAndGlyphs">PS 5M</text>
<text x="974.3" y="445" font-size="13" fill="#000" font-weight="normal" text-anchor="start" textLength="121.00" lengthAdjust="spacingAndGlyphs">VIN12345678901248</text>
<text x="1138.3" y="445" font-size="13" fill="#000" font-weight="normal" text-anchor="start" textLength="49.00" lengthAdjust="spacingAndGlyphs">Bernard</text>
<text x="1248.3" y="445" font-size="13" fill="#000" font-weight="normal" text-anchor="start" textLength="53.00" lengthAdjust="spacingAndGlyphs">Jałowiec</text>
<text x="1398.3" y="445" font-size="13" fill="#000" font-weight="normal" text-anchor="start" textLength="78.00" lengthAdjust="spacingAndGlyphs">ZS1014@a.pl</text>
<path d="M1577 430 H1583 L1577 436 Z" fill="#0e7f2f" stroke="none"/>
<text x="1579.3" y="445" font-size="13" fill="#000" font-weight="normal" text-anchor="start" textLength="7.00" lengthAdjust="spacingAndGlyphs">1</text>
<text x="1772.3" y="445" font-size="13" fill="#000" font-weight="normal" text-anchor="start" textLength="145.00" lengthAdjust="spacingAndGlyphs">SvCompany 9155648512</text>
<text x="27.3" y="465" font-size="13" fill="#000" font-weight="normal" text-anchor="start" textLength="42.00" lengthAdjust="spacingAndGlyphs">ZS1015</text>
<path d="M174 450 H180 L174 456 Z" fill="#0e7f2f" stroke="none"/>
<text x="176.3" y="465" font-size="13" fill="#000" font-weight="normal" text-anchor="start" textLength="28.00" lengthAdjust="spacingAndGlyphs">0048</text>
<path d="M332 450 H338 L332 456 Z" fill="#0e7f2f" stroke="none"/>
<text x="334.3" y="465" font-size="13" fill="#000" font-weight="normal" text-anchor="start" textLength="63.00" lengthAdjust="spacingAndGlyphs">100200315</text>
<text x="433.3" y="465" font-size="13" fill="#000" font-weight="normal" text-anchor="start" textLength="30.00" lengthAdjust="spacingAndGlyphs">Auto</text>
<text x="538.3" y="465" font-size="13" fill="#000" font-weight="normal" text-anchor="start" textLength="23.00" lengthAdjust="spacingAndGlyphs">A27</text>
<path d="M734 450 H740 L734 456 Z" fill="#0e7f2f" stroke="none"/>
<text x="736.3" y="465" font-size="13" fill="#000" font-weight="normal" text-anchor="start" textLength="28.00" lengthAdjust="spacingAndGlyphs">2015</text>
<text x="871.3" y="465" font-size="13" fill="#000" font-weight="normal" text-anchor="start" textLength="37.00" lengthAdjust="spacingAndGlyphs">PS 5M</text>
<text x="974.3" y="465" font-size="13" fill="#000" font-weight="normal" text-anchor="start" textLength="121.00" lengthAdjust="spacingAndGlyphs">VIN12345678901249</text>
<text x="1138.3" y="465" font-size="13" fill="#000" font-weight="normal" text-anchor="start" textLength="33.00" lengthAdjust="spacingAndGlyphs">Berta</text>
<text x="1248.3" y="465" font-size="13" fill="#000" font-weight="normal" text-anchor="start" textLength="36.00" lengthAdjust="spacingAndGlyphs">Sosna</text>
<text x="1398.3" y="465" font-size="13" fill="#000" font-weight="normal" text-anchor="start" textLength="78.00" lengthAdjust="spacingAndGlyphs">ZS1015@a.pl</text>
<text x="27.3" y="485" font-size="13" fill="#000" font-weight="normal" text-anchor="start" textLength="42.00" lengthAdjust="spacingAndGlyphs">ZS1016</text>
<path d="M174 470 H180 L174 476 Z" fill="#0e7f2f" stroke="none"/>
<text x="176.3" y="485" font-size="13" fill="#000" font-weight="normal" text-anchor="start" textLength="28.00" lengthAdjust="spacingAndGlyphs">0048</text>
<path d="M332 470 H338 L332 476 Z" fill="#0e7f2f" stroke="none"/>
<text x="334.3" y="485" font-size="13" fill="#000" font-weight="normal" text-anchor="start" textLength="63.00" lengthAdjust="spacingAndGlyphs">100200316</text>
<text x="433.3" y="485" font-size="13" fill="#000" font-weight="normal" text-anchor="start" textLength="30.00" lengthAdjust="spacingAndGlyphs">Auto</text>
<text x="538.3" y="485" font-size="13" fill="#000" font-weight="normal" text-anchor="start" textLength="23.00" lengthAdjust="spacingAndGlyphs">A28</text>
<path d="M734 470 H740 L734 476 Z" fill="#0e7f2f" stroke="none"/>
<text x="736.3" y="485" font-size="13" fill="#000" font-weight="normal" text-anchor="start" textLength="28.00" lengthAdjust="spacingAndGlyphs">2016</text>
<text x="871.3" y="485" font-size="13" fill="#000" font-weight="normal" text-anchor="start" textLength="37.00" lengthAdjust="spacingAndGlyphs">PS 5M</text>
<text x="974.3" y="485" font-size="13" fill="#000" font-weight="normal" text-anchor="start" textLength="121.00" lengthAdjust="spacingAndGlyphs">VIN12345678901250</text>
<text x="1138.3" y="485" font-size="13" fill="#000" font-weight="normal" text-anchor="start" textLength="41.00" lengthAdjust="spacingAndGlyphs">Blanka</text>
<text x="1248.3" y="485" font-size="13" fill="#000" font-weight="normal" text-anchor="start" textLength="29.00" lengthAdjust="spacingAndGlyphs">Róża</text>
<text x="1398.3" y="485" font-size="13" fill="#000" font-weight="normal" text-anchor="start" textLength="78.00" lengthAdjust="spacingAndGlyphs">ZS1016@a.pl</text>
<text x="27.3" y="505" font-size="13" fill="#000" font-weight="normal" text-anchor="start" textLength="42.00" lengthAdjust="spacingAndGlyphs">ZS1017</text>
<path d="M174 490 H180 L174 496 Z" fill="#0e7f2f" stroke="none"/>
<text x="176.3" y="505" font-size="13" fill="#000" font-weight="normal" text-anchor="start" textLength="28.00" lengthAdjust="spacingAndGlyphs">0048</text>
<path d="M332 490 H338 L332 496 Z" fill="#0e7f2f" stroke="none"/>
<text x="334.3" y="505" font-size="13" fill="#000" font-weight="normal" text-anchor="start" textLength="63.00" lengthAdjust="spacingAndGlyphs">100200317</text>
<text x="433.3" y="505" font-size="13" fill="#000" font-weight="normal" text-anchor="start" textLength="30.00" lengthAdjust="spacingAndGlyphs">Auto</text>
<text x="538.3" y="505" font-size="13" fill="#000" font-weight="normal" text-anchor="start" textLength="23.00" lengthAdjust="spacingAndGlyphs">A29</text>
<path d="M734 490 H740 L734 496 Z" fill="#0e7f2f" stroke="none"/>
<text x="736.3" y="505" font-size="13" fill="#000" font-weight="normal" text-anchor="start" textLength="28.00" lengthAdjust="spacingAndGlyphs">2017</text>
<text x="871.3" y="505" font-size="13" fill="#000" font-weight="normal" text-anchor="start" textLength="37.00" lengthAdjust="spacingAndGlyphs">PS 5M</text>
<text x="974.3" y="505" font-size="13" fill="#000" font-weight="normal" text-anchor="start" textLength="121.00" lengthAdjust="spacingAndGlyphs">VIN12345678901251</text>
<text x="1138.3" y="505" font-size="13" fill="#000" font-weight="normal" text-anchor="start" textLength="37.00" lengthAdjust="spacingAndGlyphs">Błażej</text>
<text x="1248.3" y="505" font-size="13" fill="#000" font-weight="normal" text-anchor="start" textLength="33.00" lengthAdjust="spacingAndGlyphs">Śliwa</text>
<text x="1398.3" y="505" font-size="13" fill="#000" font-weight="normal" text-anchor="start" textLength="78.00" lengthAdjust="spacingAndGlyphs">ZS1017@a.pl</text>
<text x="27.3" y="525" font-size="13" fill="#000" font-weight="normal" text-anchor="start" textLength="42.00" lengthAdjust="spacingAndGlyphs">ZS1018</text>
<path d="M174 510 H180 L174 516 Z" fill="#0e7f2f" stroke="none"/>
<text x="176.3" y="525" font-size="13" fill="#000" font-weight="normal" text-anchor="start" textLength="28.00" lengthAdjust="spacingAndGlyphs">0048</text>
<path d="M332 510 H338 L332 516 Z" fill="#0e7f2f" stroke="none"/>
<text x="334.3" y="525" font-size="13" fill="#000" font-weight="normal" text-anchor="start" textLength="63.00" lengthAdjust="spacingAndGlyphs">100200318</text>
<text x="433.3" y="525" font-size="13" fill="#000" font-weight="normal" text-anchor="start" textLength="30.00" lengthAdjust="spacingAndGlyphs">Auto</text>
<text x="538.3" y="525" font-size="13" fill="#000" font-weight="normal" text-anchor="start" textLength="23.00" lengthAdjust="spacingAndGlyphs">A30</text>
<path d="M734 510 H740 L734 516 Z" fill="#0e7f2f" stroke="none"/>
<text x="736.3" y="525" font-size="13" fill="#000" font-weight="normal" text-anchor="start" textLength="28.00" lengthAdjust="spacingAndGlyphs">2018</text>
<text x="871.3" y="525" font-size="13" fill="#000" font-weight="normal" text-anchor="start" textLength="37.00" lengthAdjust="spacingAndGlyphs">PS 5M</text>
<text x="974.3" y="525" font-size="13" fill="#000" font-weight="normal" text-anchor="start" textLength="121.00" lengthAdjust="spacingAndGlyphs">VIN12345678901252</text>
<text x="1138.3" y="525" font-size="13" fill="#000" font-weight="normal" text-anchor="start" textLength="46.00" lengthAdjust="spacingAndGlyphs">Bogdan</text>
<text x="1248.3" y="525" font-size="13" fill="#000" font-weight="normal" text-anchor="start" textLength="38.00" lengthAdjust="spacingAndGlyphs">Jarząb</text>
<text x="1398.3" y="525" font-size="13" fill="#000" font-weight="normal" text-anchor="start" textLength="78.00" lengthAdjust="spacingAndGlyphs">ZS1018@a.pl</text>
<text x="27.3" y="545" font-size="13" fill="#000" font-weight="normal" text-anchor="start" textLength="42.00" lengthAdjust="spacingAndGlyphs">ZS1019</text>
<path d="M174 530 H180 L174 536 Z" fill="#0e7f2f" stroke="none"/>
<text x="176.3" y="545" font-size="13" fill="#000" font-weight="normal" text-anchor="start" textLength="28.00" lengthAdjust="spacingAndGlyphs">0048</text>
<path d="M332 530 H338 L332 536 Z" fill="#0e7f2f" stroke="none"/>
<text x="334.3" y="545" font-size="13" fill="#000" font-weight="normal" text-anchor="start" textLength="63.00" lengthAdjust="spacingAndGlyphs">100200319</text>
<text x="433.3" y="545" font-size="13" fill="#000" font-weight="normal" text-anchor="start" textLength="30.00" lengthAdjust="spacingAndGlyphs">Auto</text>
<text x="538.3" y="545" font-size="13" fill="#000" font-weight="normal" text-anchor="start" textLength="23.00" lengthAdjust="spacingAndGlyphs">A31</text>
<path d="M734 530 H740 L734 536 Z" fill="#0e7f2f" stroke="none"/>
<text x="736.3" y="545" font-size="13" fill="#000" font-weight="normal" text-anchor="start" textLength="28.00" lengthAdjust="spacingAndGlyphs">2019</text>
<text x="871.3" y="545" font-size="13" fill="#000" font-weight="normal" text-anchor="start" textLength="37.00" lengthAdjust="spacingAndGlyphs">PS 5M</text>
<text x="974.3" y="545" font-size="13" fill="#000" font-weight="normal" text-anchor="start" textLength="121.00" lengthAdjust="spacingAndGlyphs">VIN12345678901253</text>
<text x="1138.3" y="545" font-size="13" fill="#000" font-weight="normal" text-anchor="start" textLength="53.00" lengthAdjust="spacingAndGlyphs">Bonifacy</text>
<text x="1248.3" y="545" font-size="13" fill="#000" font-weight="normal" text-anchor="start" textLength="39.00" lengthAdjust="spacingAndGlyphs">Jesion</text>
<text x="1398.3" y="545" font-size="13" fill="#000" font-weight="normal" text-anchor="start" textLength="78.00" lengthAdjust="spacingAndGlyphs">ZS1019@a.pl</text>
<text x="27.3" y="565" font-size="13" fill="#000" font-weight="normal" text-anchor="start" textLength="42.00" lengthAdjust="spacingAndGlyphs">ZS1020</text>
<path d="M174 550 H180 L174 556 Z" fill="#0e7f2f" stroke="none"/>
<text x="176.3" y="565" font-size="13" fill="#000" font-weight="normal" text-anchor="start" textLength="28.00" lengthAdjust="spacingAndGlyphs">0048</text>
<path d="M332 550 H338 L332 556 Z" fill="#0e7f2f" stroke="none"/>
<text x="334.3" y="565" font-size="13" fill="#000" font-weight="normal" text-anchor="start" textLength="63.00" lengthAdjust="spacingAndGlyphs">100200320</text>
<text x="433.3" y="565" font-size="13" fill="#000" font-weight="normal" text-anchor="start" textLength="30.00" lengthAdjust="spacingAndGlyphs">Auto</text>
<text x="538.3" y="565" font-size="13" fill="#000" font-weight="normal" text-anchor="start" textLength="23.00" lengthAdjust="spacingAndGlyphs">A32</text>
<path d="M734 550 H740 L734 556 Z" fill="#0e7f2f" stroke="none"/>
<text x="736.3" y="565" font-size="13" fill="#000" font-weight="normal" text-anchor="start" textLength="28.00" lengthAdjust="spacingAndGlyphs">2020</text>
<text x="871.3" y="565" font-size="13" fill="#000" font-weight="normal" text-anchor="start" textLength="37.00" lengthAdjust="spacingAndGlyphs">PS 5M</text>
<text x="974.3" y="565" font-size="13" fill="#000" font-weight="normal" text-anchor="start" textLength="121.00" lengthAdjust="spacingAndGlyphs">VIN12345678901254</text>
<text x="1138.3" y="565" font-size="13" fill="#000" font-weight="normal" text-anchor="start" textLength="44.00" lengthAdjust="spacingAndGlyphs">Cecylia</text>
<text x="1248.3" y="565" font-size="13" fill="#000" font-weight="normal" text-anchor="start" textLength="32.00" lengthAdjust="spacingAndGlyphs">Jodła</text>
<text x="1398.3" y="565" font-size="13" fill="#000" font-weight="normal" text-anchor="start" textLength="78.00" lengthAdjust="spacingAndGlyphs">ZS1020@a.pl</text>
<text x="27.3" y="585" font-size="13" fill="#000" font-weight="normal" text-anchor="start" textLength="42.00" lengthAdjust="spacingAndGlyphs">ZS1021</text>
<path d="M174 570 H180 L174 576 Z" fill="#0e7f2f" stroke="none"/>
<text x="176.3" y="585" font-size="13" fill="#000" font-weight="normal" text-anchor="start" textLength="28.00" lengthAdjust="spacingAndGlyphs">0048</text>
<path d="M332 570 H338 L332 576 Z" fill="#0e7f2f" stroke="none"/>
<text x="334.3" y="585" font-size="13" fill="#000" font-weight="normal" text-anchor="start" textLength="63.00" lengthAdjust="spacingAndGlyphs">100200321</text>
<text x="433.3" y="585" font-size="13" fill="#000" font-weight="normal" text-anchor="start" textLength="30.00" lengthAdjust="spacingAndGlyphs">Auto</text>
<text x="538.3" y="585" font-size="13" fill="#000" font-weight="normal" text-anchor="start" textLength="23.00" lengthAdjust="spacingAndGlyphs">A33</text>
<path d="M734 570 H740 L734 576 Z" fill="#0e7f2f" stroke="none"/>
<text x="736.3" y="585" font-size="13" fill="#000" font-weight="normal" text-anchor="start" textLength="28.00" lengthAdjust="spacingAndGlyphs">2021</text>
<text x="871.3" y="585" font-size="13" fill="#000" font-weight="normal" text-anchor="start" textLength="4.00" lengthAdjust="spacingAndGlyphs">.</text>
<text x="974.3" y="585" font-size="13" fill="#000" font-weight="normal" text-anchor="start" textLength="121.00" lengthAdjust="spacingAndGlyphs">VIN12345678901255</text>
<text x="1138.3" y="585" font-size="13" fill="#000" font-weight="normal" text-anchor="start" textLength="39.00" lengthAdjust="spacingAndGlyphs">Celina</text>
<text x="1248.3" y="585" font-size="13" fill="#000" font-weight="normal" text-anchor="start" textLength="38.00" lengthAdjust="spacingAndGlyphs">Kalina</text>
<text x="1398.3" y="585" font-size="13" fill="#000" font-weight="normal" text-anchor="start" textLength="78.00" lengthAdjust="spacingAndGlyphs">ZS1021@a.pl</text>
<text x="27.3" y="605" font-size="13" fill="#000" font-weight="normal" text-anchor="start" textLength="42.00" lengthAdjust="spacingAndGlyphs">ZS1022</text>
<path d="M174 590 H180 L174 596 Z" fill="#0e7f2f" stroke="none"/>
<text x="176.3" y="605" font-size="13" fill="#000" font-weight="normal" text-anchor="start" textLength="28.00" lengthAdjust="spacingAndGlyphs">0048</text>
<path d="M332 590 H338 L332 596 Z" fill="#0e7f2f" stroke="none"/>
<text x="334.3" y="605" font-size="13" fill="#000" font-weight="normal" text-anchor="start" textLength="63.00" lengthAdjust="spacingAndGlyphs">100200322</text>
<text x="433.3" y="605" font-size="13" fill="#000" font-weight="normal" text-anchor="start" textLength="30.00" lengthAdjust="spacingAndGlyphs">Auto</text>
<text x="538.3" y="605" font-size="13" fill="#000" font-weight="normal" text-anchor="start" textLength="23.00" lengthAdjust="spacingAndGlyphs">A34</text>
<path d="M734 590 H740 L734 596 Z" fill="#0e7f2f" stroke="none"/>
<text x="736.3" y="605" font-size="13" fill="#000" font-weight="normal" text-anchor="start" textLength="28.00" lengthAdjust="spacingAndGlyphs">2022</text>
<text x="871.3" y="605" font-size="13" fill="#000" font-weight="normal" text-anchor="start" textLength="4.00" lengthAdjust="spacingAndGlyphs">.</text>
<text x="974.3" y="605" font-size="13" fill="#000" font-weight="normal" text-anchor="start" textLength="121.00" lengthAdjust="spacingAndGlyphs">VIN12345678901256</text>
<text x="1138.3" y="605" font-size="13" fill="#000" font-weight="normal" text-anchor="start" textLength="41.00" lengthAdjust="spacingAndGlyphs">Cezary</text>
<text x="1248.3" y="605" font-size="13" fill="#000" font-weight="normal" text-anchor="start" textLength="28.00" lengthAdjust="spacingAndGlyphs">Klon</text>
<text x="1398.3" y="605" font-size="13" fill="#000" font-weight="normal" text-anchor="start" textLength="78.00" lengthAdjust="spacingAndGlyphs">ZS1022@a.pl</text>
<text x="27.3" y="625" font-size="13" fill="#000" font-weight="normal" text-anchor="start" textLength="42.00" lengthAdjust="spacingAndGlyphs">ZS1023</text>
<path d="M174 610 H180 L174 616 Z" fill="#0e7f2f" stroke="none"/>
<text x="176.3" y="625" font-size="13" fill="#000" font-weight="normal" text-anchor="start" textLength="28.00" lengthAdjust="spacingAndGlyphs">0048</text>
<path d="M332 610 H338 L332 616 Z" fill="#0e7f2f" stroke="none"/>
<text x="334.3" y="625" font-size="13" fill="#000" font-weight="normal" text-anchor="start" textLength="63.00" lengthAdjust="spacingAndGlyphs">100200323</text>
<text x="433.3" y="625" font-size="13" fill="#000" font-weight="normal" text-anchor="start" textLength="30.00" lengthAdjust="spacingAndGlyphs">Auto</text>
<text x="538.3" y="625" font-size="13" fill="#000" font-weight="normal" text-anchor="start" textLength="23.00" lengthAdjust="spacingAndGlyphs">A35</text>
<path d="M734 610 H740 L734 616 Z" fill="#0e7f2f" stroke="none"/>
<text x="736.3" y="625" font-size="13" fill="#000" font-weight="normal" text-anchor="start" textLength="28.00" lengthAdjust="spacingAndGlyphs">2023</text>
<text x="871.3" y="625" font-size="13" fill="#000" font-weight="normal" text-anchor="start" textLength="4.00" lengthAdjust="spacingAndGlyphs">.</text>
<text x="974.3" y="625" font-size="13" fill="#000" font-weight="normal" text-anchor="start" textLength="121.00" lengthAdjust="spacingAndGlyphs">VIN12345678901257</text>
<text x="1138.3" y="625" font-size="13" fill="#000" font-weight="normal" text-anchor="start" textLength="47.00" lengthAdjust="spacingAndGlyphs">Cyprian</text>
<text x="1248.3" y="625" font-size="13" fill="#000" font-weight="normal" text-anchor="start" textLength="42.00" lengthAdjust="spacingAndGlyphs">Świerk</text>
<text x="1398.3" y="625" font-size="13" fill="#000" font-weight="normal" text-anchor="start" textLength="78.00" lengthAdjust="spacingAndGlyphs">ZS1023@a.pl</text>
<text x="27.3" y="645" font-size="13" fill="#000" font-weight="normal" text-anchor="start" textLength="42.00" lengthAdjust="spacingAndGlyphs">ZS1024</text>
<path d="M174 630 H180 L174 636 Z" fill="#0e7f2f" stroke="none"/>
<text x="176.3" y="645" font-size="13" fill="#000" font-weight="normal" text-anchor="start" textLength="28.00" lengthAdjust="spacingAndGlyphs">0048</text>
<path d="M332 630 H338 L332 636 Z" fill="#0e7f2f" stroke="none"/>
<text x="334.3" y="645" font-size="13" fill="#000" font-weight="normal" text-anchor="start" textLength="63.00" lengthAdjust="spacingAndGlyphs">100200324</text>
<text x="433.3" y="645" font-size="13" fill="#000" font-weight="normal" text-anchor="start" textLength="30.00" lengthAdjust="spacingAndGlyphs">Auto</text>
<text x="538.3" y="645" font-size="13" fill="#000" font-weight="normal" text-anchor="start" textLength="23.00" lengthAdjust="spacingAndGlyphs">A36</text>
<path d="M734 630 H740 L734 636 Z" fill="#0e7f2f" stroke="none"/>
<text x="736.3" y="645" font-size="13" fill="#000" font-weight="normal" text-anchor="start" textLength="28.00" lengthAdjust="spacingAndGlyphs">2024</text>
<text x="871.3" y="645" font-size="13" fill="#000" font-weight="normal" text-anchor="start" textLength="4.00" lengthAdjust="spacingAndGlyphs">.</text>
<text x="974.3" y="645" font-size="13" fill="#000" font-weight="normal" text-anchor="start" textLength="121.00" lengthAdjust="spacingAndGlyphs">VIN12345678901258</text>
<text x="1138.3" y="645" font-size="13" fill="#000" font-weight="normal" text-anchor="start" textLength="50.00" lengthAdjust="spacingAndGlyphs">Czesław</text>
<text x="1248.3" y="645" font-size="13" fill="#000" font-weight="normal" text-anchor="start" textLength="51.00" lengthAdjust="spacingAndGlyphs">Wierzba</text>
<text x="1398.3" y="645" font-size="13" fill="#000" font-weight="normal" text-anchor="start" textLength="78.00" lengthAdjust="spacingAndGlyphs">ZS1024@a.pl</text>
<text x="27.3" y="665" font-size="13" fill="#000" font-weight="normal" text-anchor="start" textLength="42.00" lengthAdjust="spacingAndGlyphs">ZS1025</text>
<path d="M174 650 H180 L174 656 Z" fill="#0e7f2f" stroke="none"/>
<text x="176.3" y="665" font-size="13" fill="#000" font-weight="normal" text-anchor="start" textLength="28.00" lengthAdjust="spacingAndGlyphs">0048</text>
<path d="M332 650 H338 L332 656 Z" fill="#0e7f2f" stroke="none"/>
<text x="334.3" y="665" font-size="13" fill="#000" font-weight="normal" text-anchor="start" textLength="63.00" lengthAdjust="spacingAndGlyphs">100200325</text>
<text x="433.3" y="665" font-size="13" fill="#000" font-weight="normal" text-anchor="start" textLength="30.00" lengthAdjust="spacingAndGlyphs">Auto</text>
<text x="538.3" y="665" font-size="13" fill="#000" font-weight="normal" text-anchor="start" textLength="23.00" lengthAdjust="spacingAndGlyphs">A37</text>
<path d="M734 650 H740 L734 656 Z" fill="#0e7f2f" stroke="none"/>
<text x="736.3" y="665" font-size="13" fill="#000" font-weight="normal" text-anchor="start" textLength="28.00" lengthAdjust="spacingAndGlyphs">2025</text>
<text x="871.3" y="665" font-size="13" fill="#000" font-weight="normal" text-anchor="start" textLength="4.00" lengthAdjust="spacingAndGlyphs">.</text>
<text x="974.3" y="665" font-size="13" fill="#000" font-weight="normal" text-anchor="start" textLength="121.00" lengthAdjust="spacingAndGlyphs">VIN12345678901259</text>
<text x="1138.3" y="665" font-size="13" fill="#000" font-weight="normal" text-anchor="start" textLength="57.00" lengthAdjust="spacingAndGlyphs">Czesława</text>
<text x="1248.3" y="665" font-size="13" fill="#000" font-weight="normal" text-anchor="start" textLength="30.00" lengthAdjust="spacingAndGlyphs">Wiąz</text>
<text x="1398.3" y="665" font-size="13" fill="#000" font-weight="normal" text-anchor="start" textLength="78.00" lengthAdjust="spacingAndGlyphs">ZS1025@a.pl</text>
<text x="27.3" y="685" font-size="13" fill="#000" font-weight="normal" text-anchor="start" textLength="42.00" lengthAdjust="spacingAndGlyphs">ZS1026</text>
<path d="M174 670 H180 L174 676 Z" fill="#0e7f2f" stroke="none"/>
<text x="176.3" y="685" font-size="13" fill="#000" font-weight="normal" text-anchor="start" textLength="28.00" lengthAdjust="spacingAndGlyphs">0048</text>
<path d="M332 670 H338 L332 676 Z" fill="#0e7f2f" stroke="none"/>
<text x="334.3" y="685" font-size="13" fill="#000" font-weight="normal" text-anchor="start" textLength="63.00" lengthAdjust="spacingAndGlyphs">100200326</text>
<text x="433.3" y="685" font-size="13" fill="#000" font-weight="normal" text-anchor="start" textLength="30.00" lengthAdjust="spacingAndGlyphs">Auto</text>
<text x="538.3" y="685" font-size="13" fill="#000" font-weight="normal" text-anchor="start" textLength="23.00" lengthAdjust="spacingAndGlyphs">A38</text>
<path d="M734 670 H740 L734 676 Z" fill="#0e7f2f" stroke="none"/>
<text x="736.3" y="685" font-size="13" fill="#000" font-weight="normal" text-anchor="start" textLength="28.00" lengthAdjust="spacingAndGlyphs">2026</text>
<text x="871.3" y="685" font-size="13" fill="#000" font-weight="normal" text-anchor="start" textLength="4.00" lengthAdjust="spacingAndGlyphs">.</text>
<text x="974.3" y="685" font-size="13" fill="#000" font-weight="normal" text-anchor="start" textLength="121.00" lengthAdjust="spacingAndGlyphs">VIN12345678901260</text>
<text x="1138.3" y="685" font-size="13" fill="#000" font-weight="normal" text-anchor="start" textLength="45.00" lengthAdjust="spacingAndGlyphs">Czcibor</text>
<text x="1248.3" y="685" font-size="13" fill="#000" font-weight="normal" text-anchor="start" textLength="42.00" lengthAdjust="spacingAndGlyphs">Topola</text>
<text x="1398.3" y="685" font-size="13" fill="#000" font-weight="normal" text-anchor="start" textLength="78.00" lengthAdjust="spacingAndGlyphs">ZS1026@a.pl</text>
<text x="27.3" y="705" font-size="13" fill="#000" font-weight="normal" text-anchor="start" textLength="42.00" lengthAdjust="spacingAndGlyphs">ZS1027</text>
<path d="M174 690 H180 L174 696 Z" fill="#0e7f2f" stroke="none"/>
<text x="176.3" y="705" font-size="13" fill="#000" font-weight="normal" text-anchor="start" textLength="28.00" lengthAdjust="spacingAndGlyphs">0048</text>
<path d="M332 690 H338 L332 696 Z" fill="#0e7f2f" stroke="none"/>
<text x="334.3" y="705" font-size="13" fill="#000" font-weight="normal" text-anchor="start" textLength="63.00" lengthAdjust="spacingAndGlyphs">100200327</text>
<text x="433.3" y="705" font-size="13" fill="#000" font-weight="normal" text-anchor="start" textLength="30.00" lengthAdjust="spacingAndGlyphs">Auto</text>
<text x="538.3" y="705" font-size="13" fill="#000" font-weight="normal" text-anchor="start" textLength="23.00" lengthAdjust="spacingAndGlyphs">A39</text>
<path d="M734 690 H740 L734 696 Z" fill="#0e7f2f" stroke="none"/>
<text x="736.3" y="705" font-size="13" fill="#000" font-weight="normal" text-anchor="start" textLength="28.00" lengthAdjust="spacingAndGlyphs">2027</text>
<text x="871.3" y="705" font-size="13" fill="#000" font-weight="normal" text-anchor="start" textLength="4.00" lengthAdjust="spacingAndGlyphs">.</text>
<text x="974.3" y="705" font-size="13" fill="#000" font-weight="normal" text-anchor="start" textLength="121.00" lengthAdjust="spacingAndGlyphs">VIN12345678901261</text>
<text x="1138.3" y="705" font-size="13" fill="#000" font-weight="normal" text-anchor="start" textLength="31.00" lengthAdjust="spacingAndGlyphs">Cyryl</text>
<text x="1248.3" y="705" font-size="13" fill="#000" font-weight="normal" text-anchor="start" textLength="60.00" lengthAdjust="spacingAndGlyphs">Leszczyna</text>
<text x="1398.3" y="705" font-size="13" fill="#000" font-weight="normal" text-anchor="start" textLength="78.00" lengthAdjust="spacingAndGlyphs">ZS1027@a.pl</text>
<text x="27.3" y="725" font-size="13" fill="#000" font-weight="normal" text-anchor="start" textLength="42.00" lengthAdjust="spacingAndGlyphs">ZS1028</text>
<path d="M174 710 H180 L174 716 Z" fill="#0e7f2f" stroke="none"/>
<text x="176.3" y="725" font-size="13" fill="#000" font-weight="normal" text-anchor="start" textLength="28.00" lengthAdjust="spacingAndGlyphs">0048</text>
<path d="M332 710 H338 L332 716 Z" fill="#0e7f2f" stroke="none"/>
<text x="334.3" y="725" font-size="13" fill="#000" font-weight="normal" text-anchor="start" textLength="63.00" lengthAdjust="spacingAndGlyphs">100200328</text>
<text x="433.3" y="725" font-size="13" fill="#000" font-weight="normal" text-anchor="start" textLength="30.00" lengthAdjust="spacingAndGlyphs">Auto</text>
<text x="538.3" y="725" font-size="13" fill="#000" font-weight="normal" text-anchor="start" textLength="23.00" lengthAdjust="spacingAndGlyphs">A40</text>
<path d="M734 710 H740 L734 716 Z" fill="#0e7f2f" stroke="none"/>
<text x="736.3" y="725" font-size="13" fill="#000" font-weight="normal" text-anchor="start" textLength="28.00" lengthAdjust="spacingAndGlyphs">2028</text>
<text x="871.3" y="725" font-size="13" fill="#000" font-weight="normal" text-anchor="start" textLength="4.00" lengthAdjust="spacingAndGlyphs">.</text>
<text x="974.3" y="725" font-size="13" fill="#000" font-weight="normal" text-anchor="start" textLength="121.00" lengthAdjust="spacingAndGlyphs">VIN12345678901262</text>
<text x="1138.3" y="725" font-size="13" fill="#000" font-weight="normal" text-anchor="start" textLength="34.00" lengthAdjust="spacingAndGlyphs">Cyryk</text>
<text x="1248.3" y="725" font-size="13" fill="#000" font-weight="normal" text-anchor="start" textLength="42.00" lengthAdjust="spacingAndGlyphs">Wiśnia</text>
<text x="1398.3" y="725" font-size="13" fill="#000" font-weight="normal" text-anchor="start" textLength="78.00" lengthAdjust="spacingAndGlyphs">ZS1028@a.pl</text>
<text x="27.3" y="745" font-size="13" fill="#000" font-weight="normal" text-anchor="start" textLength="42.00" lengthAdjust="spacingAndGlyphs">ZS1029</text>
<path d="M174 730 H180 L174 736 Z" fill="#0e7f2f" stroke="none"/>
<text x="176.3" y="745" font-size="13" fill="#000" font-weight="normal" text-anchor="start" textLength="28.00" lengthAdjust="spacingAndGlyphs">0048</text>
<path d="M332 730 H338 L332 736 Z" fill="#0e7f2f" stroke="none"/>
<text x="334.3" y="745" font-size="13" fill="#000" font-weight="normal" text-anchor="start" textLength="63.00" lengthAdjust="spacingAndGlyphs">100200329</text>
<text x="433.3" y="745" font-size="13" fill="#000" font-weight="normal" text-anchor="start" textLength="30.00" lengthAdjust="spacingAndGlyphs">Auto</text>
<text x="538.3" y="745" font-size="13" fill="#000" font-weight="normal" text-anchor="start" textLength="23.00" lengthAdjust="spacingAndGlyphs">A41</text>
<path d="M734 730 H740 L734 736 Z" fill="#0e7f2f" stroke="none"/>
<text x="736.3" y="745" font-size="13" fill="#000" font-weight="normal" text-anchor="start" textLength="28.00" lengthAdjust="spacingAndGlyphs">2029</text>
<text x="871.3" y="745" font-size="13" fill="#000" font-weight="normal" text-anchor="start" textLength="4.00" lengthAdjust="spacingAndGlyphs">.</text>
<text x="974.3" y="745" font-size="13" fill="#000" font-weight="normal" text-anchor="start" textLength="121.00" lengthAdjust="spacingAndGlyphs">VIN12345678901263</text>
<text x="1138.3" y="745" font-size="13" fill="#000" font-weight="normal" text-anchor="start" textLength="42.00" lengthAdjust="spacingAndGlyphs">Czabor</text>
<text x="1248.3" y="745" font-size="13" fill="#000" font-weight="normal" text-anchor="start" textLength="60.00" lengthAdjust="spacingAndGlyphs">Czereśnia</text>
<text x="1398.3" y="745" font-size="13" fill="#000" font-weight="normal" text-anchor="start" textLength="78.00" lengthAdjust="spacingAndGlyphs">ZS1029@a.pl</text>
<text x="27.3" y="765" font-size="13" fill="#000" font-weight="normal" text-anchor="start" textLength="42.00" lengthAdjust="spacingAndGlyphs">ZS1030</text>
<path d="M174 750 H180 L174 756 Z" fill="#0e7f2f" stroke="none"/>
<text x="176.3" y="765" font-size="13" fill="#000" font-weight="normal" text-anchor="start" textLength="28.00" lengthAdjust="spacingAndGlyphs">0048</text>
<path d="M332 750 H338 L332 756 Z" fill="#0e7f2f" stroke="none"/>
<text x="334.3" y="765" font-size="13" fill="#000" font-weight="normal" text-anchor="start" textLength="63.00" lengthAdjust="spacingAndGlyphs">100200330</text>
<text x="433.3" y="765" font-size="13" fill="#000" font-weight="normal" text-anchor="start" textLength="30.00" lengthAdjust="spacingAndGlyphs">Auto</text>
<text x="538.3" y="765" font-size="13" fill="#000" font-weight="normal" text-anchor="start" textLength="23.00" lengthAdjust="spacingAndGlyphs">A42</text>
<path d="M734 750 H740 L734 756 Z" fill="#0e7f2f" stroke="none"/>
<text x="736.3" y="765" font-size="13" fill="#000" font-weight="normal" text-anchor="start" textLength="28.00" lengthAdjust="spacingAndGlyphs">2030</text>
<text x="871.3" y="765" font-size="13" fill="#000" font-weight="normal" text-anchor="start" textLength="4.00" lengthAdjust="spacingAndGlyphs">.</text>
<text x="974.3" y="765" font-size="13" fill="#000" font-weight="normal" text-anchor="start" textLength="121.00" lengthAdjust="spacingAndGlyphs">VIN12345678901264</text>
<text x="1138.3" y="765" font-size="13" fill="#000" font-weight="normal" text-anchor="start" textLength="54.00" lengthAdjust="spacingAndGlyphs">Dagmara</text>
<text x="1248.3" y="765" font-size="13" fill="#000" font-weight="normal" text-anchor="start" textLength="41.00" lengthAdjust="spacingAndGlyphs">Cyprys</text>
<text x="1398.3" y="765" font-size="13" fill="#000" font-weight="normal" text-anchor="start" textLength="78.00" lengthAdjust="spacingAndGlyphs">ZS1030@a.pl</text>
<text x="27.3" y="785" font-size="13" fill="#000" font-weight="normal" text-anchor="start" textLength="42.00" lengthAdjust="spacingAndGlyphs">ZS1031</text>
<path d="M174 770 H180 L174 776 Z" fill="#0e7f2f" stroke="none"/>
<text x="176.3" y="785" font-size="13" fill="#000" font-weight="normal" text-anchor="start" textLength="28.00" lengthAdjust="spacingAndGlyphs">0048</text>
<path d="M332 770 H338 L332 776 Z" fill="#0e7f2f" stroke="none"/>
<text x="334.3" y="785" font-size="13" fill="#000" font-weight="normal" text-anchor="start" textLength="63.00" lengthAdjust="spacingAndGlyphs">100200331</text>
<text x="433.3" y="785" font-size="13" fill="#000" font-weight="normal" text-anchor="start" textLength="30.00" lengthAdjust="spacingAndGlyphs">Auto</text>
<text x="538.3" y="785" font-size="13" fill="#000" font-weight="normal" text-anchor="start" textLength="23.00" lengthAdjust="spacingAndGlyphs">A43</text>
<path d="M734 770 H740 L734 776 Z" fill="#0e7f2f" stroke="none"/>
<text x="736.3" y="785" font-size="13" fill="#000" font-weight="normal" text-anchor="start" textLength="28.00" lengthAdjust="spacingAndGlyphs">2031</text>
<text x="871.3" y="785" font-size="13" fill="#000" font-weight="normal" text-anchor="start" textLength="30.00" lengthAdjust="spacingAndGlyphs">biały</text>
<text x="974.3" y="785" font-size="13" fill="#000" font-weight="normal" text-anchor="start" textLength="121.00" lengthAdjust="spacingAndGlyphs">VIN12345678901265</text>
<text x="1138.3" y="785" font-size="13" fill="#000" font-weight="normal" text-anchor="start" textLength="31.00" lengthAdjust="spacingAndGlyphs">Dalia</text>
<text x="1248.3" y="785" font-size="13" fill="#000" font-weight="normal" text-anchor="start" textLength="44.00" lengthAdjust="spacingAndGlyphs">Bluszcz</text>
<text x="1398.3" y="785" font-size="13" fill="#000" font-weight="normal" text-anchor="start" textLength="78.00" lengthAdjust="spacingAndGlyphs">ZS1031@a.pl</text>
<text x="27.3" y="805" font-size="13" fill="#000" font-weight="normal" text-anchor="start" textLength="42.00" lengthAdjust="spacingAndGlyphs">ZS1032</text>
<path d="M174 790 H180 L174 796 Z" fill="#0e7f2f" stroke="none"/>
<text x="176.3" y="805" font-size="13" fill="#000" font-weight="normal" text-anchor="start" textLength="28.00" lengthAdjust="spacingAndGlyphs">0048</text>
<path d="M332 790 H338 L332 796 Z" fill="#0e7f2f" stroke="none"/>
<text x="334.3" y="805" font-size="13" fill="#000" font-weight="normal" text-anchor="start" textLength="63.00" lengthAdjust="spacingAndGlyphs">100200332</text>
<text x="433.3" y="805" font-size="13" fill="#000" font-weight="normal" text-anchor="start" textLength="30.00" lengthAdjust="spacingAndGlyphs">Auto</text>
<text x="538.3" y="805" font-size="13" fill="#000" font-weight="normal" text-anchor="start" textLength="23.00" lengthAdjust="spacingAndGlyphs">A44</text>
<path d="M734 790 H740 L734 796 Z" fill="#0e7f2f" stroke="none"/>
<text x="736.3" y="805" font-size="13" fill="#000" font-weight="normal" text-anchor="start" textLength="28.00" lengthAdjust="spacingAndGlyphs">2032</text>
<text x="871.3" y="805" font-size="13" fill="#000" font-weight="normal" text-anchor="start" textLength="30.00" lengthAdjust="spacingAndGlyphs">biały</text>
<text x="974.3" y="805" font-size="13" fill="#000" font-weight="normal" text-anchor="start" textLength="121.00" lengthAdjust="spacingAndGlyphs">VIN12345678901266</text>
<text x="1138.3" y="805" font-size="13" fill="#000" font-weight="normal" text-anchor="start" textLength="47.00" lengthAdjust="spacingAndGlyphs">Damian</text>
<text x="1248.3" y="805" font-size="13" fill="#000" font-weight="normal" text-anchor="start" textLength="84.00" lengthAdjust="spacingAndGlyphs">Kasztanowiec</text>
<text x="1398.3" y="805" font-size="13" fill="#000" font-weight="normal" text-anchor="start" textLength="78.00" lengthAdjust="spacingAndGlyphs">ZS1032@a.pl</text>
<text x="27.3" y="825" font-size="13" fill="#000" font-weight="normal" text-anchor="start" textLength="42.00" lengthAdjust="spacingAndGlyphs">ZS1033</text>
<path d="M174 810 H180 L174 816 Z" fill="#0e7f2f" stroke="none"/>
<text x="176.3" y="825" font-size="13" fill="#000" font-weight="normal" text-anchor="start" textLength="28.00" lengthAdjust="spacingAndGlyphs">0048</text>
<path d="M332 810 H338 L332 816 Z" fill="#0e7f2f" stroke="none"/>
<text x="334.3" y="825" font-size="13" fill="#000" font-weight="normal" text-anchor="start" textLength="63.00" lengthAdjust="spacingAndGlyphs">100200333</text>
<text x="433.3" y="825" font-size="13" fill="#000" font-weight="normal" text-anchor="start" textLength="30.00" lengthAdjust="spacingAndGlyphs">Auto</text>
<text x="538.3" y="825" font-size="13" fill="#000" font-weight="normal" text-anchor="start" textLength="23.00" lengthAdjust="spacingAndGlyphs">A45</text>
<path d="M734 810 H740 L734 816 Z" fill="#0e7f2f" stroke="none"/>
<text x="736.3" y="825" font-size="13" fill="#000" font-weight="normal" text-anchor="start" textLength="28.00" lengthAdjust="spacingAndGlyphs">2033</text>
<text x="871.3" y="825" font-size="13" fill="#000" font-weight="normal" text-anchor="start" textLength="30.00" lengthAdjust="spacingAndGlyphs">biały</text>
<text x="974.3" y="825" font-size="13" fill="#000" font-weight="normal" text-anchor="start" textLength="121.00" lengthAdjust="spacingAndGlyphs">VIN12345678901267</text>
<text x="1138.3" y="825" font-size="13" fill="#000" font-weight="normal" text-anchor="start" textLength="40.00" lengthAdjust="spacingAndGlyphs">Daniel</text>
<text x="1248.3" y="825" font-size="13" fill="#000" font-weight="normal" text-anchor="start" textLength="54.00" lengthAdjust="spacingAndGlyphs">Miłorząb</text>
<text x="1398.3" y="825" font-size="13" fill="#000" font-weight="normal" text-anchor="start" textLength="78.00" lengthAdjust="spacingAndGlyphs">ZS1033@a.pl</text>
<text x="27.3" y="845" font-size="13" fill="#000" font-weight="normal" text-anchor="start" textLength="42.00" lengthAdjust="spacingAndGlyphs">ZS1034</text>
<path d="M174 830 H180 L174 836 Z" fill="#0e7f2f" stroke="none"/>
<text x="176.3" y="845" font-size="13" fill="#000" font-weight="normal" text-anchor="start" textLength="28.00" lengthAdjust="spacingAndGlyphs">0048</text>
<path d="M332 830 H338 L332 836 Z" fill="#0e7f2f" stroke="none"/>
<text x="334.3" y="845" font-size="13" fill="#000" font-weight="normal" text-anchor="start" textLength="63.00" lengthAdjust="spacingAndGlyphs">100200334</text>
<text x="433.3" y="845" font-size="13" fill="#000" font-weight="normal" text-anchor="start" textLength="30.00" lengthAdjust="spacingAndGlyphs">Auto</text>
<text x="538.3" y="845" font-size="13" fill="#000" font-weight="normal" text-anchor="start" textLength="23.00" lengthAdjust="spacingAndGlyphs">A46</text>
<path d="M734 830 H740 L734 836 Z" fill="#0e7f2f" stroke="none"/>
<text x="736.3" y="845" font-size="13" fill="#000" font-weight="normal" text-anchor="start" textLength="28.00" lengthAdjust="spacingAndGlyphs">2034</text>
<text x="871.3" y="845" font-size="13" fill="#000" font-weight="normal" text-anchor="start" textLength="30.00" lengthAdjust="spacingAndGlyphs">biały</text>
<text x="974.3" y="845" font-size="13" fill="#000" font-weight="normal" text-anchor="start" textLength="121.00" lengthAdjust="spacingAndGlyphs">VIN12345678901268</text>
<text x="1138.3" y="845" font-size="13" fill="#000" font-weight="normal" text-anchor="start" textLength="44.00" lengthAdjust="spacingAndGlyphs">Danuta</text>
<text x="1248.3" y="845" font-size="13" fill="#000" font-weight="normal" text-anchor="start" textLength="39.00" lengthAdjust="spacingAndGlyphs">Platan</text>
<text x="1398.3" y="845" font-size="13" fill="#000" font-weight="normal" text-anchor="start" textLength="78.00" lengthAdjust="spacingAndGlyphs">ZS1034@a.pl</text>
<text x="27.3" y="865" font-size="13" fill="#000" font-weight="normal" text-anchor="start" textLength="42.00" lengthAdjust="spacingAndGlyphs">ZS1035</text>
<path d="M174 850 H180 L174 856 Z" fill="#0e7f2f" stroke="none"/>
<text x="176.3" y="865" font-size="13" fill="#000" font-weight="normal" text-anchor="start" textLength="28.00" lengthAdjust="spacingAndGlyphs">0048</text>
<path d="M332 850 H338 L332 856 Z" fill="#0e7f2f" stroke="none"/>
<text x="334.3" y="865" font-size="13" fill="#000" font-weight="normal" text-anchor="start" textLength="63.00" lengthAdjust="spacingAndGlyphs">100200335</text>
<text x="433.3" y="865" font-size="13" fill="#000" font-weight="normal" text-anchor="start" textLength="30.00" lengthAdjust="spacingAndGlyphs">Auto</text>
<text x="538.3" y="865" font-size="13" fill="#000" font-weight="normal" text-anchor="start" textLength="23.00" lengthAdjust="spacingAndGlyphs">A47</text>
<path d="M734 850 H740 L734 856 Z" fill="#0e7f2f" stroke="none"/>
<text x="736.3" y="865" font-size="13" fill="#000" font-weight="normal" text-anchor="start" textLength="28.00" lengthAdjust="spacingAndGlyphs">2035</text>
<text x="871.3" y="865" font-size="13" fill="#000" font-weight="normal" text-anchor="start" textLength="30.00" lengthAdjust="spacingAndGlyphs">biały</text>
<text x="974.3" y="865" font-size="13" fill="#000" font-weight="normal" text-anchor="start" textLength="121.00" lengthAdjust="spacingAndGlyphs">VIN12345678901269</text>
<text x="1138.3" y="865" font-size="13" fill="#000" font-weight="normal" text-anchor="start" textLength="32.00" lengthAdjust="spacingAndGlyphs">Daria</text>
<text x="1248.3" y="865" font-size="13" fill="#000" font-weight="normal" text-anchor="start" textLength="40.00" lengthAdjust="spacingAndGlyphs">Akacja</text>
<text x="1398.3" y="865" font-size="13" fill="#000" font-weight="normal" text-anchor="start" textLength="78.00" lengthAdjust="spacingAndGlyphs">ZS1035@a.pl</text>
<text x="27.3" y="885" font-size="13" fill="#000" font-weight="normal" text-anchor="start" textLength="42.00" lengthAdjust="spacingAndGlyphs">ZS1036</text>
<path d="M174 870 H180 L174 876 Z" fill="#0e7f2f" stroke="none"/>
<text x="176.3" y="885" font-size="13" fill="#000" font-weight="normal" text-anchor="start" textLength="28.00" lengthAdjust="spacingAndGlyphs">0048</text>
<path d="M332 870 H338 L332 876 Z" fill="#0e7f2f" stroke="none"/>
<text x="334.3" y="885" font-size="13" fill="#000" font-weight="normal" text-anchor="start" textLength="63.00" lengthAdjust="spacingAndGlyphs">100200336</text>
<text x="433.3" y="885" font-size="13" fill="#000" font-weight="normal" text-anchor="start" textLength="30.00" lengthAdjust="spacingAndGlyphs">Auto</text>
<text x="538.3" y="885" font-size="13" fill="#000" font-weight="normal" text-anchor="start" textLength="23.00" lengthAdjust="spacingAndGlyphs">A48</text>
<path d="M734 870 H740 L734 876 Z" fill="#0e7f2f" stroke="none"/>
<text x="736.3" y="885" font-size="13" fill="#000" font-weight="normal" text-anchor="start" textLength="28.00" lengthAdjust="spacingAndGlyphs">2036</text>
<text x="871.3" y="885" font-size="13" fill="#000" font-weight="normal" text-anchor="start" textLength="30.00" lengthAdjust="spacingAndGlyphs">biały</text>
<text x="974.3" y="885" font-size="13" fill="#000" font-weight="normal" text-anchor="start" textLength="121.00" lengthAdjust="spacingAndGlyphs">VIN12345678901270</text>
<text x="1138.3" y="885" font-size="13" fill="#000" font-weight="normal" text-anchor="start" textLength="45.00" lengthAdjust="spacingAndGlyphs">Dariusz</text>
<text x="1248.3" y="885" font-size="13" fill="#000" font-weight="normal" text-anchor="start" textLength="45.00" lengthAdjust="spacingAndGlyphs">Ananas</text>
<text x="1398.3" y="885" font-size="13" fill="#000" font-weight="normal" text-anchor="start" textLength="78.00" lengthAdjust="spacingAndGlyphs">ZS1036@a.pl</text>
<text x="27.3" y="905" font-size="13" fill="#000" font-weight="normal" text-anchor="start" textLength="42.00" lengthAdjust="spacingAndGlyphs">ZS1037</text>
<path d="M174 890 H180 L174 896 Z" fill="#0e7f2f" stroke="none"/>
<text x="176.3" y="905" font-size="13" fill="#000" font-weight="normal" text-anchor="start" textLength="28.00" lengthAdjust="spacingAndGlyphs">0048</text>
<path d="M332 890 H338 L332 896 Z" fill="#0e7f2f" stroke="none"/>
<text x="334.3" y="905" font-size="13" fill="#000" font-weight="normal" text-anchor="start" textLength="63.00" lengthAdjust="spacingAndGlyphs">100200337</text>
<text x="433.3" y="905" font-size="13" fill="#000" font-weight="normal" text-anchor="start" textLength="30.00" lengthAdjust="spacingAndGlyphs">Auto</text>
<text x="538.3" y="905" font-size="13" fill="#000" font-weight="normal" text-anchor="start" textLength="23.00" lengthAdjust="spacingAndGlyphs">A49</text>
<path d="M734 890 H740 L734 896 Z" fill="#0e7f2f" stroke="none"/>
<text x="736.3" y="905" font-size="13" fill="#000" font-weight="normal" text-anchor="start" textLength="28.00" lengthAdjust="spacingAndGlyphs">2037</text>
<text x="871.3" y="905" font-size="13" fill="#000" font-weight="normal" text-anchor="start" textLength="30.00" lengthAdjust="spacingAndGlyphs">biały</text>
<text x="974.3" y="905" font-size="13" fill="#000" font-weight="normal" text-anchor="start" textLength="121.00" lengthAdjust="spacingAndGlyphs">VIN12345678901271</text>
<text x="1138.3" y="905" font-size="13" fill="#000" font-weight="normal" text-anchor="start" textLength="39.00" lengthAdjust="spacingAndGlyphs">Dawid</text>
<text x="1248.3" y="905" font-size="13" fill="#000" font-weight="normal" text-anchor="start" textLength="38.00" lengthAdjust="spacingAndGlyphs">Banan</text>
<text x="1398.3" y="905" font-size="13" fill="#000" font-weight="normal" text-anchor="start" textLength="78.00" lengthAdjust="spacingAndGlyphs">ZS1037@a.pl</text>
<text x="27.3" y="925" font-size="13" fill="#000" font-weight="normal" text-anchor="start" textLength="42.00" lengthAdjust="spacingAndGlyphs">ZS1038</text>
<path d="M174 910 H180 L174 916 Z" fill="#0e7f2f" stroke="none"/>
<text x="176.3" y="925" font-size="13" fill="#000" font-weight="normal" text-anchor="start" textLength="28.00" lengthAdjust="spacingAndGlyphs">0048</text>
<path d="M332 910 H338 L332 916 Z" fill="#0e7f2f" stroke="none"/>
<text x="334.3" y="925" font-size="13" fill="#000" font-weight="normal" text-anchor="start" textLength="63.00" lengthAdjust="spacingAndGlyphs">100200338</text>
<text x="433.3" y="925" font-size="13" fill="#000" font-weight="normal" text-anchor="start" textLength="30.00" lengthAdjust="spacingAndGlyphs">Auto</text>
<text x="538.3" y="925" font-size="13" fill="#000" font-weight="normal" text-anchor="start" textLength="23.00" lengthAdjust="spacingAndGlyphs">A50</text>
<path d="M734 910 H740 L734 916 Z" fill="#0e7f2f" stroke="none"/>
<text x="736.3" y="925" font-size="13" fill="#000" font-weight="normal" text-anchor="start" textLength="28.00" lengthAdjust="spacingAndGlyphs">2038</text>
<text x="871.3" y="925" font-size="13" fill="#000" font-weight="normal" text-anchor="start" textLength="30.00" lengthAdjust="spacingAndGlyphs">biały</text>
<text x="974.3" y="925" font-size="13" fill="#000" font-weight="normal" text-anchor="start" textLength="121.00" lengthAdjust="spacingAndGlyphs">VIN12345678901272</text>
<text x="1138.3" y="925" font-size="13" fill="#000" font-weight="normal" text-anchor="start" textLength="35.00" lengthAdjust="spacingAndGlyphs">Diana</text>
<text x="1248.3" y="925" font-size="13" fill="#000" font-weight="normal" text-anchor="start" textLength="49.00" lengthAdjust="spacingAndGlyphs">Bambus</text>
<text x="1398.3" y="925" font-size="13" fill="#000" font-weight="normal" text-anchor="start" textLength="78.00" lengthAdjust="spacingAndGlyphs">ZS1038@a.pl</text>
<text x="27.3" y="945" font-size="13" fill="#000" font-weight="normal" text-anchor="start" textLength="42.00" lengthAdjust="spacingAndGlyphs">ZS1039</text>
<path d="M174 930 H180 L174 936 Z" fill="#0e7f2f" stroke="none"/>
<text x="176.3" y="945" font-size="13" fill="#000" font-weight="normal" text-anchor="start" textLength="28.00" lengthAdjust="spacingAndGlyphs">0048</text>
<path d="M332 930 H338 L332 936 Z" fill="#0e7f2f" stroke="none"/>
<text x="334.3" y="945" font-size="13" fill="#000" font-weight="normal" text-anchor="start" textLength="63.00" lengthAdjust="spacingAndGlyphs">100200339</text>
<text x="433.3" y="945" font-size="13" fill="#000" font-weight="normal" text-anchor="start" textLength="30.00" lengthAdjust="spacingAndGlyphs">Auto</text>
<text x="538.3" y="945" font-size="13" fill="#000" font-weight="normal" text-anchor="start" textLength="23.00" lengthAdjust="spacingAndGlyphs">A51</text>
<path d="M734 930 H740 L734 936 Z" fill="#0e7f2f" stroke="none"/>
<text x="736.3" y="945" font-size="13" fill="#000" font-weight="normal" text-anchor="start" textLength="28.00" lengthAdjust="spacingAndGlyphs">2039</text>
<text x="871.3" y="945" font-size="13" fill="#000" font-weight="normal" text-anchor="start" textLength="30.00" lengthAdjust="spacingAndGlyphs">biały</text>
<text x="974.3" y="945" font-size="13" fill="#000" font-weight="normal" text-anchor="start" textLength="121.00" lengthAdjust="spacingAndGlyphs">VIN12345678901273</text>
<text x="1138.3" y="945" font-size="13" fill="#000" font-weight="normal" text-anchor="start" textLength="42.00" lengthAdjust="spacingAndGlyphs">Dorota</text>
<text x="1248.3" y="945" font-size="13" fill="#000" font-weight="normal" text-anchor="start" textLength="33.00" lengthAdjust="spacingAndGlyphs">Aster</text>
<text x="1398.3" y="945" font-size="13" fill="#000" font-weight="normal" text-anchor="start" textLength="78.00" lengthAdjust="spacingAndGlyphs">ZS1039@a.pl</text>
<text x="27.3" y="965" font-size="13" fill="#000" font-weight="normal" text-anchor="start" textLength="42.00" lengthAdjust="spacingAndGlyphs">ZS1040</text>
<path d="M174 950 H180 L174 956 Z" fill="#0e7f2f" stroke="none"/>
<text x="176.3" y="965" font-size="13" fill="#000" font-weight="normal" text-anchor="start" textLength="28.00" lengthAdjust="spacingAndGlyphs">0048</text>
<path d="M332 950 H338 L332 956 Z" fill="#0e7f2f" stroke="none"/>
<text x="334.3" y="965" font-size="13" fill="#000" font-weight="normal" text-anchor="start" textLength="63.00" lengthAdjust="spacingAndGlyphs">100200340</text>
<text x="433.3" y="965" font-size="13" fill="#000" font-weight="normal" text-anchor="start" textLength="30.00" lengthAdjust="spacingAndGlyphs">Auto</text>
<text x="538.3" y="965" font-size="13" fill="#000" font-weight="normal" text-anchor="start" textLength="23.00" lengthAdjust="spacingAndGlyphs">A52</text>
<path d="M734 950 H740 L734 956 Z" fill="#0e7f2f" stroke="none"/>
<text x="736.3" y="965" font-size="13" fill="#000" font-weight="normal" text-anchor="start" textLength="28.00" lengthAdjust="spacingAndGlyphs">2040</text>
<text x="871.3" y="965" font-size="13" fill="#000" font-weight="normal" text-anchor="start" textLength="30.00" lengthAdjust="spacingAndGlyphs">biały</text>
<text x="974.3" y="965" font-size="13" fill="#000" font-weight="normal" text-anchor="start" textLength="121.00" lengthAdjust="spacingAndGlyphs">VIN12345678901274</text>
<text x="1138.3" y="965" font-size="13" fill="#000" font-weight="normal" text-anchor="start" textLength="51.00" lengthAdjust="spacingAndGlyphs">Edmund</text>
<text x="1248.3" y="965" font-size="13" fill="#000" font-weight="normal" text-anchor="start" textLength="50.00" lengthAdjust="spacingAndGlyphs">Begonia</text>
<text x="1398.3" y="965" font-size="13" fill="#000" font-weight="normal" text-anchor="start" textLength="78.00" lengthAdjust="spacingAndGlyphs">ZS1040@a.pl</text>
<text x="27.3" y="985" font-size="13" fill="#000" font-weight="normal" text-anchor="start" textLength="42.00" lengthAdjust="spacingAndGlyphs">ZS1041</text>
<path d="M174 970 H180 L174 976 Z" fill="#0e7f2f" stroke="none"/>
<text x="176.3" y="985" font-size="13" fill="#000" font-weight="normal" text-anchor="start" textLength="28.00" lengthAdjust="spacingAndGlyphs">0048</text>
<path d="M332 970 H338 L332 976 Z" fill="#0e7f2f" stroke="none"/>
<text x="334.3" y="985" font-size="13" fill="#000" font-weight="normal" text-anchor="start" textLength="63.00" lengthAdjust="spacingAndGlyphs">100200341</text>
<text x="433.3" y="985" font-size="13" fill="#000" font-weight="normal" text-anchor="start" textLength="30.00" lengthAdjust="spacingAndGlyphs">Auto</text>
<text x="538.3" y="985" font-size="13" fill="#000" font-weight="normal" text-anchor="start" textLength="23.00" lengthAdjust="spacingAndGlyphs">A53</text>
<path d="M734 970 H740 L734 976 Z" fill="#0e7f2f" stroke="none"/>
<text x="736.3" y="985" font-size="13" fill="#000" font-weight="normal" text-anchor="start" textLength="28.00" lengthAdjust="spacingAndGlyphs">2041</text>
<text x="974.3" y="985" font-size="13" fill="#000" font-weight="normal" text-anchor="start" textLength="121.00" lengthAdjust="spacingAndGlyphs">VIN12345678901275</text>
<text x="1138.3" y="985" font-size="13" fill="#000" font-weight="normal" text-anchor="start" textLength="34.00" lengthAdjust="spacingAndGlyphs">Edgar</text>
<text x="1248.3" y="985" font-size="13" fill="#000" font-weight="normal" text-anchor="start" textLength="42.00" lengthAdjust="spacingAndGlyphs">Chrzan</text>
<text x="1398.3" y="985" font-size="13" fill="#000" font-weight="normal" text-anchor="start" textLength="78.00" lengthAdjust="spacingAndGlyphs">ZS1041@a.pl</text>
<text x="27.3" y="1005" font-size="13" fill="#000" font-weight="normal" text-anchor="start" textLength="42.00" lengthAdjust="spacingAndGlyphs">ZS1042</text>
<path d="M174 990 H180 L174 996 Z" fill="#0e7f2f" stroke="none"/>
<text x="176.3" y="1005" font-size="13" fill="#000" font-weight="normal" text-anchor="start" textLength="28.00" lengthAdjust="spacingAndGlyphs">0048</text>
<path d="M332 990 H338 L332 996 Z" fill="#0e7f2f" stroke="none"/>
<text x="334.3" y="1005" font-size="13" fill="#000" font-weight="normal" text-anchor="start" textLength="63.00" lengthAdjust="spacingAndGlyphs">100200342</text>
<text x="433.3" y="1005" font-size="13" fill="#000" font-weight="normal" text-anchor="start" textLength="30.00" lengthAdjust="spacingAndGlyphs">Auto</text>
<text x="538.3" y="1005" font-size="13" fill="#000" font-weight="normal" text-anchor="start" textLength="23.00" lengthAdjust="spacingAndGlyphs">A54</text>
<path d="M734 990 H740 L734 996 Z" fill="#0e7f2f" stroke="none"/>
<text x="736.3" y="1005" font-size="13" fill="#000" font-weight="normal" text-anchor="start" textLength="28.00" lengthAdjust="spacingAndGlyphs">2042</text>
<text x="974.3" y="1005" font-size="13" fill="#000" font-weight="normal" text-anchor="start" textLength="121.00" lengthAdjust="spacingAndGlyphs">VIN12345678901276</text>
<text x="1138.3" y="1005" font-size="13" fill="#000" font-weight="normal" text-anchor="start" textLength="46.00" lengthAdjust="spacingAndGlyphs">Edward</text>
<text x="1248.3" y="1005" font-size="13" fill="#000" font-weight="normal" text-anchor="start" textLength="43.00" lengthAdjust="spacingAndGlyphs">Cebula</text>
<text x="1398.3" y="1005" font-size="13" fill="#000" font-weight="normal" text-anchor="start" textLength="78.00" lengthAdjust="spacingAndGlyphs">ZS1042@a.pl</text>
<text x="27.3" y="1025" font-size="13" fill="#000" font-weight="normal" text-anchor="start" textLength="42.00" lengthAdjust="spacingAndGlyphs">ZS1043</text>
<path d="M174 1010 H180 L174 1016 Z" fill="#0e7f2f" stroke="none"/>
<text x="176.3" y="1025" font-size="13" fill="#000" font-weight="normal" text-anchor="start" textLength="28.00" lengthAdjust="spacingAndGlyphs">0048</text>
<path d="M332 1010 H338 L332 1016 Z" fill="#0e7f2f" stroke="none"/>
<text x="334.3" y="1025" font-size="13" fill="#000" font-weight="normal" text-anchor="start" textLength="63.00" lengthAdjust="spacingAndGlyphs">100200343</text>
<text x="433.3" y="1025" font-size="13" fill="#000" font-weight="normal" text-anchor="start" textLength="30.00" lengthAdjust="spacingAndGlyphs">Auto</text>
<text x="538.3" y="1025" font-size="13" fill="#000" font-weight="normal" text-anchor="start" textLength="23.00" lengthAdjust="spacingAndGlyphs">A55</text>
<path d="M734 1010 H740 L734 1016 Z" fill="#0e7f2f" stroke="none"/>
<text x="736.3" y="1025" font-size="13" fill="#000" font-weight="normal" text-anchor="start" textLength="28.00" lengthAdjust="spacingAndGlyphs">2043</text>
<text x="974.3" y="1025" font-size="13" fill="#000" font-weight="normal" text-anchor="start" textLength="121.00" lengthAdjust="spacingAndGlyphs">VIN12345678901277</text>
<text x="1138.3" y="1025" font-size="13" fill="#000" font-weight="normal" text-anchor="start" textLength="34.00" lengthAdjust="spacingAndGlyphs">Edyta</text>
<text x="1248.3" y="1025" font-size="13" fill="#000" font-weight="normal" text-anchor="start" textLength="34.00" lengthAdjust="spacingAndGlyphs">Cynia</text>
<text x="1398.3" y="1025" font-size="13" fill="#000" font-weight="normal" text-anchor="start" textLength="78.00" lengthAdjust="spacingAndGlyphs">ZS1043@a.pl</text>
<text x="27.3" y="1045" font-size="13" fill="#000" font-weight="normal" text-anchor="start" textLength="42.00" lengthAdjust="spacingAndGlyphs">ZS1044</text>
<path d="M174 1030 H180 L174 1036 Z" fill="#0e7f2f" stroke="none"/>
<text x="176.3" y="1045" font-size="13" fill="#000" font-weight="normal" text-anchor="start" textLength="28.00" lengthAdjust="spacingAndGlyphs">0048</text>
<path d="M332 1030 H338 L332 1036 Z" fill="#0e7f2f" stroke="none"/>
<text x="334.3" y="1045" font-size="13" fill="#000" font-weight="normal" text-anchor="start" textLength="63.00" lengthAdjust="spacingAndGlyphs">100200344</text>
<text x="433.3" y="1045" font-size="13" fill="#000" font-weight="normal" text-anchor="start" textLength="30.00" lengthAdjust="spacingAndGlyphs">Auto</text>
<text x="538.3" y="1045" font-size="13" fill="#000" font-weight="normal" text-anchor="start" textLength="23.00" lengthAdjust="spacingAndGlyphs">A56</text>
<path d="M734 1030 H740 L734 1036 Z" fill="#0e7f2f" stroke="none"/>
<text x="736.3" y="1045" font-size="13" fill="#000" font-weight="normal" text-anchor="start" textLength="28.00" lengthAdjust="spacingAndGlyphs">2044</text>
<text x="974.3" y="1045" font-size="13" fill="#000" font-weight="normal" text-anchor="start" textLength="121.00" lengthAdjust="spacingAndGlyphs">VIN12345678901278</text>
<text x="1138.3" y="1045" font-size="13" fill="#000" font-weight="normal" text-anchor="start" textLength="30.00" lengthAdjust="spacingAndGlyphs">Egon</text>
<text x="1248.3" y="1045" font-size="13" fill="#000" font-weight="normal" text-anchor="start" textLength="47.00" lengthAdjust="spacingAndGlyphs">Cytryna</text>
<text x="1398.3" y="1045" font-size="13" fill="#000" font-weight="normal" text-anchor="start" textLength="78.00" lengthAdjust="spacingAndGlyphs">ZS1044@a.pl</text>
<text x="27.3" y="1065" font-size="13" fill="#000" font-weight="normal" text-anchor="start" textLength="42.00" lengthAdjust="spacingAndGlyphs">ZS1045</text>
<path d="M174 1050 H180 L174 1056 Z" fill="#0e7f2f" stroke="none"/>
<text x="176.3" y="1065" font-size="13" fill="#000" font-weight="normal" text-anchor="start" textLength="28.00" lengthAdjust="spacingAndGlyphs">0048</text>
<path d="M332 1050 H338 L332 1056 Z" fill="#0e7f2f" stroke="none"/>
<text x="334.3" y="1065" font-size="13" fill="#000" font-weight="normal" text-anchor="start" textLength="63.00" lengthAdjust="spacingAndGlyphs">100200345</text>
<text x="433.3" y="1065" font-size="13" fill="#000" font-weight="normal" text-anchor="start" textLength="30.00" lengthAdjust="spacingAndGlyphs">Auto</text>
<text x="538.3" y="1065" font-size="13" fill="#000" font-weight="normal" text-anchor="start" textLength="23.00" lengthAdjust="spacingAndGlyphs">A57</text>
<path d="M734 1050 H740 L734 1056 Z" fill="#0e7f2f" stroke="none"/>
<text x="736.3" y="1065" font-size="13" fill="#000" font-weight="normal" text-anchor="start" textLength="28.00" lengthAdjust="spacingAndGlyphs">2045</text>
<text x="974.3" y="1065" font-size="13" fill="#000" font-weight="normal" text-anchor="start" textLength="121.00" lengthAdjust="spacingAndGlyphs">VIN12345678901279</text>
<text x="1138.3" y="1065" font-size="13" fill="#000" font-weight="normal" text-anchor="start" textLength="28.00" lengthAdjust="spacingAndGlyphs">Eliza</text>
<text x="1248.3" y="1065" font-size="13" fill="#000" font-weight="normal" text-anchor="start" textLength="31.00" lengthAdjust="spacingAndGlyphs">Dalia</text>
<text x="1398.3" y="1065" font-size="13" fill="#000" font-weight="normal" text-anchor="start" textLength="78.00" lengthAdjust="spacingAndGlyphs">ZS1045@a.pl</text>
<text x="27.3" y="1085" font-size="13" fill="#000" font-weight="normal" text-anchor="start" textLength="42.00" lengthAdjust="spacingAndGlyphs">ZS1046</text>
<path d="M174 1070 H180 L174 1076 Z" fill="#0e7f2f" stroke="none"/>
<text x="176.3" y="1085" font-size="13" fill="#000" font-weight="normal" text-anchor="start" textLength="28.00" lengthAdjust="spacingAndGlyphs">0048</text>
<path d="M332 1070 H338 L332 1076 Z" fill="#0e7f2f" stroke="none"/>
<text x="334.3" y="1085" font-size="13" fill="#000" font-weight="normal" text-anchor="start" textLength="63.00" lengthAdjust="spacingAndGlyphs">100200346</text>
<text x="433.3" y="1085" font-size="13" fill="#000" font-weight="normal" text-anchor="start" textLength="30.00" lengthAdjust="spacingAndGlyphs">Auto</text>
<text x="538.3" y="1085" font-size="13" fill="#000" font-weight="normal" text-anchor="start" textLength="23.00" lengthAdjust="spacingAndGlyphs">A58</text>
<path d="M734 1070 H740 L734 1076 Z" fill="#0e7f2f" stroke="none"/>
<text x="736.3" y="1085" font-size="13" fill="#000" font-weight="normal" text-anchor="start" textLength="28.00" lengthAdjust="spacingAndGlyphs">2046</text>
<text x="974.3" y="1085" font-size="13" fill="#000" font-weight="normal" text-anchor="start" textLength="121.00" lengthAdjust="spacingAndGlyphs">VIN12345678901280</text>
<text x="1138.3" y="1085" font-size="13" fill="#000" font-weight="normal" text-anchor="start" textLength="38.00" lengthAdjust="spacingAndGlyphs">Elwira</text>
<text x="1248.3" y="1085" font-size="13" fill="#000" font-weight="normal" text-anchor="start" textLength="38.00" lengthAdjust="spacingAndGlyphs">Dereń</text>
<text x="1398.3" y="1085" font-size="13" fill="#000" font-weight="normal" text-anchor="start" textLength="78.00" lengthAdjust="spacingAndGlyphs">ZS1046@a.pl</text>
<text x="27.3" y="1105" font-size="13" fill="#000" font-weight="normal" text-anchor="start" textLength="42.00" lengthAdjust="spacingAndGlyphs">ZS1047</text>
<path d="M174 1090 H180 L174 1096 Z" fill="#0e7f2f" stroke="none"/>
<text x="176.3" y="1105" font-size="13" fill="#000" font-weight="normal" text-anchor="start" textLength="28.00" lengthAdjust="spacingAndGlyphs">0048</text>
<path d="M332 1090 H338 L332 1096 Z" fill="#0e7f2f" stroke="none"/>
<text x="334.3" y="1105" font-size="13" fill="#000" font-weight="normal" text-anchor="start" textLength="63.00" lengthAdjust="spacingAndGlyphs">100200347</text>
<text x="433.3" y="1105" font-size="13" fill="#000" font-weight="normal" text-anchor="start" textLength="30.00" lengthAdjust="spacingAndGlyphs">Auto</text>
<text x="538.3" y="1105" font-size="13" fill="#000" font-weight="normal" text-anchor="start" textLength="23.00" lengthAdjust="spacingAndGlyphs">A59</text>
<path d="M734 1090 H740 L734 1096 Z" fill="#0e7f2f" stroke="none"/>
<text x="736.3" y="1105" font-size="13" fill="#000" font-weight="normal" text-anchor="start" textLength="28.00" lengthAdjust="spacingAndGlyphs">2047</text>
<text x="974.3" y="1105" font-size="13" fill="#000" font-weight="normal" text-anchor="start" textLength="121.00" lengthAdjust="spacingAndGlyphs">VIN12345678901281</text>
<text x="1138.3" y="1105" font-size="13" fill="#000" font-weight="normal" text-anchor="start" textLength="37.00" lengthAdjust="spacingAndGlyphs">Erazm</text>
<text x="1248.3" y="1105" font-size="13" fill="#000" font-weight="normal" text-anchor="start" textLength="57.00" lengthAdjust="spacingAndGlyphs">Dzwonek</text>
<text x="1398.3" y="1105" font-size="13" fill="#000" font-weight="normal" text-anchor="start" textLength="78.00" lengthAdjust="spacingAndGlyphs">ZS1047@a.pl</text>
</g>
<rect x="868" y="528" width="2" height="23" fill="#217346"/>
<rect x="868" y="528" width="105" height="2" fill="#217346"/>
<rect x="971" y="528" width="2" height="17" fill="#217346"/>
<rect x="868" y="549" width="100" height="2" fill="#217346"/>
<rect x="968" y="546" width="7" height="7" fill="#fff"/>
<rect x="969" y="547" width="5" height="5" fill="#217346"/>
<rect x="1897" y="129" width="1" height="981" fill="#9c9c9c"/>
<rect x="0" y="1109" width="1918" height="1" fill="#9c9c9c"/>
<rect x="735.5" y="1089.5" width="19" height="19" fill="#fff" stroke="#a8a8a8"/>
<rect x="739" y="1093" width="5.5" height="3.5" fill="#3f7ff5"/><g fill="none" stroke="#8f8f8f" stroke-width="1"><rect x="738.5" y="1092.5" width="12" height="4"/><rect x="738.5" y="1096.5" width="6" height="4"/><path d="M749.5 1100 V1105 M747 1102.5 H752"/></g>
<g fill="#8f8f8f"><rect x="738" y="1102" width="1" height="1"/><rect x="744" y="1102" width="1" height="1"/><rect x="738" y="1104" width="1" height="1"/><rect x="740" y="1104" width="1" height="1"/><rect x="742" y="1104" width="1" height="1"/><rect x="744" y="1104" width="1" height="1"/></g>
<rect x="3" y="119" width="429" height="32" fill="none" stroke="#00cc00" stroke-width="4"/>
<rect x="1898" y="110" width="20" height="1000" fill="#e6e6e6"/>
<rect x="1901" y="127" width="15" height="968" fill="#f2f2f2"/>
<rect x="1901.5" y="112.5" width="14" height="14" fill="#fff" stroke="#bcbcbc"/>
<path d="M1905 122 L1908.5 118 L1912 122 Z" fill="#222"/>
<rect x="1901.5" y="127.5" width="14" height="233" fill="#fff" stroke="#bcbcbc"/>
<rect x="1901.5" y="1095.5" width="14" height="14" fill="#fff" stroke="#a6a6a6"/>
<path d="M1905 1101 L1908.5 1104.5 L1912 1101 Z" fill="#222"/>
<rect x="0" y="1110" width="1918" height="27" fill="#e6e6e6"/>
<rect x="0" y="1137" width="1918" height="1" fill="#d6d6d6"/>
<path d="M30 1119 L26 1122.5 L30 1126 Z" fill="#c2c2c2"/><path d="M55.5 1119 L59.5 1122.5 L55.5 1126 Z" fill="#c2c2c2"/>
<rect x="99" y="1109" width="72" height="24" fill="#fff"/>
<rect x="99" y="1109" width="1" height="24" fill="#bcbcbc"/>
<rect x="170" y="1109" width="1" height="24" fill="#bcbcbc"/>
<rect x="99" y="1132" width="72" height="2" fill="#217346"/>
<text x="111" y="1126.5" font-size="13" fill="#217346" font-weight="bold" text-anchor="start" textLength="48.00" lengthAdjust="spacingAndGlyphs">Arkusz1</text>
<circle cx="212" cy="1123" r="7.5" fill="none" stroke="#7a7a7a" stroke-width="1.1"/><path d="M212 1119 V1127 M208 1123 H216" stroke="#555" stroke-width="1.5"/>
<rect x="1151" y="1118" width="2" height="2" fill="#a8a8a8"/>
<rect x="1151" y="1122" width="2" height="2" fill="#a8a8a8"/>
<rect x="1151" y="1126" width="2" height="2" fill="#a8a8a8"/>
<rect x="1168" y="1116" width="730" height="15" fill="#f0f0f0"/>
<rect x="1168.5" y="1116.5" width="14" height="14" fill="#fff" stroke="#a6a6a6"/>
<path d="M1173 1123.5 L1177 1120 L1177 1127 Z" fill="#222"/>
<rect x="1182.5" y="1116.5" width="519" height="14" fill="#fff" stroke="#a6a6a6"/>
<rect x="1883.5" y="1116.5" width="14" height="14" fill="#fff" stroke="#a6a6a6"/>
<path d="M1893 1123.5 L1889 1120 L1889 1127 Z" fill="#222"/>
<rect x="0" y="1138" width="1918" height="19" fill="#f3f2f1"/>
<text x="7.5" y="1152" font-size="12" fill="#555" font-weight="normal" text-anchor="start" textLength="40.00" lengthAdjust="spacingAndGlyphs">Gotowy</text>
<g fill="none" stroke="#3a3a3a" stroke-width="1.1"><path d="M86 1153.5 H82.7 V1142.7 H95.3 V1146 M82.7 1144.6 H95.3"/><path d="M84.2 1146.5 H86.5 M84.2 1148.5 H86 M84.2 1150.5 H86"/><circle cx="91.5" cy="1150.4" r="3.7"/></g><circle cx="91.5" cy="1150.4" r="1.5" fill="#3a3a3a"/>
<g fill="none" stroke="#3a3a3a" stroke-width="1.1" stroke-linecap="round"><circle cx="119.9" cy="1142.9" r="1.6"/><path d="M117.8 1147.8 C117.2 1146.2 114.3 1146.6 114.3 1145 C114.3 1143.9 115.8 1143.9 117 1144.7 C118.6 1145.6 121.4 1145.6 123 1144.7 C124.2 1143.9 125.7 1143.9 125.7 1145 C125.7 1146.4 122.8 1146.1 122.5 1147.8 V1149.5"/><path d="M117.8 1147.8 C118 1150 116.3 1151.4 116.6 1153.2 C116.8 1154.3 117.8 1154.5 118.6 1154.5"/><path d="M120.5 1151.2 L123.3 1154.5 L128.6 1149.3"/></g>
<text x="131.5" y="1152.5" font-size="12" fill="#444" font-weight="normal" text-anchor="start" textLength="219.00" lengthAdjust="spacingAndGlyphs">Ułatwienia dostępu: dobrze przygotowane</text>
<rect x="1619" y="1138" width="40" height="19" fill="#c8c8c8"/>
<g fill="none" stroke="#444" stroke-width="1"><rect x="1632.5" y="1141.5" width="12" height="12"/><path d="M1636.5 1141.5 V1153.5 M1640.5 1141.5 V1153.5 M1632.5 1145.5 H1644.5 M1632.5 1149.5 H1644.5"/><rect x="1672.5" y="1141.5" width="13" height="12"/><rect x="1674.5" y="1143.5" width="9" height="8"/><path d="M1676 1145.5 H1682 M1676 1147.5 H1682 M1676 1149.5 H1682"/><path d="M1712.5 1141.5 H1726.5 V1153.5 H1712.5 Z M1716.5 1141.5 V1146.5 H1712.5 M1719.5 1141.5 V1146.5 H1716.5"/><path d="M1745 1147.5 H1752.5 M1863 1147.5 H1871 M1867 1143.5 V1151.5"/></g>
<rect x="1758" y="1147" width="100" height="1" fill="#555"/>
<rect x="1806" y="1143" width="5" height="11" fill="#333"/>
<text x="1884" y="1152" font-size="12" fill="#555" font-weight="normal" text-anchor="start" textLength="27.00" lengthAdjust="spacingAndGlyphs">100%</text>
</svg></body></html>
